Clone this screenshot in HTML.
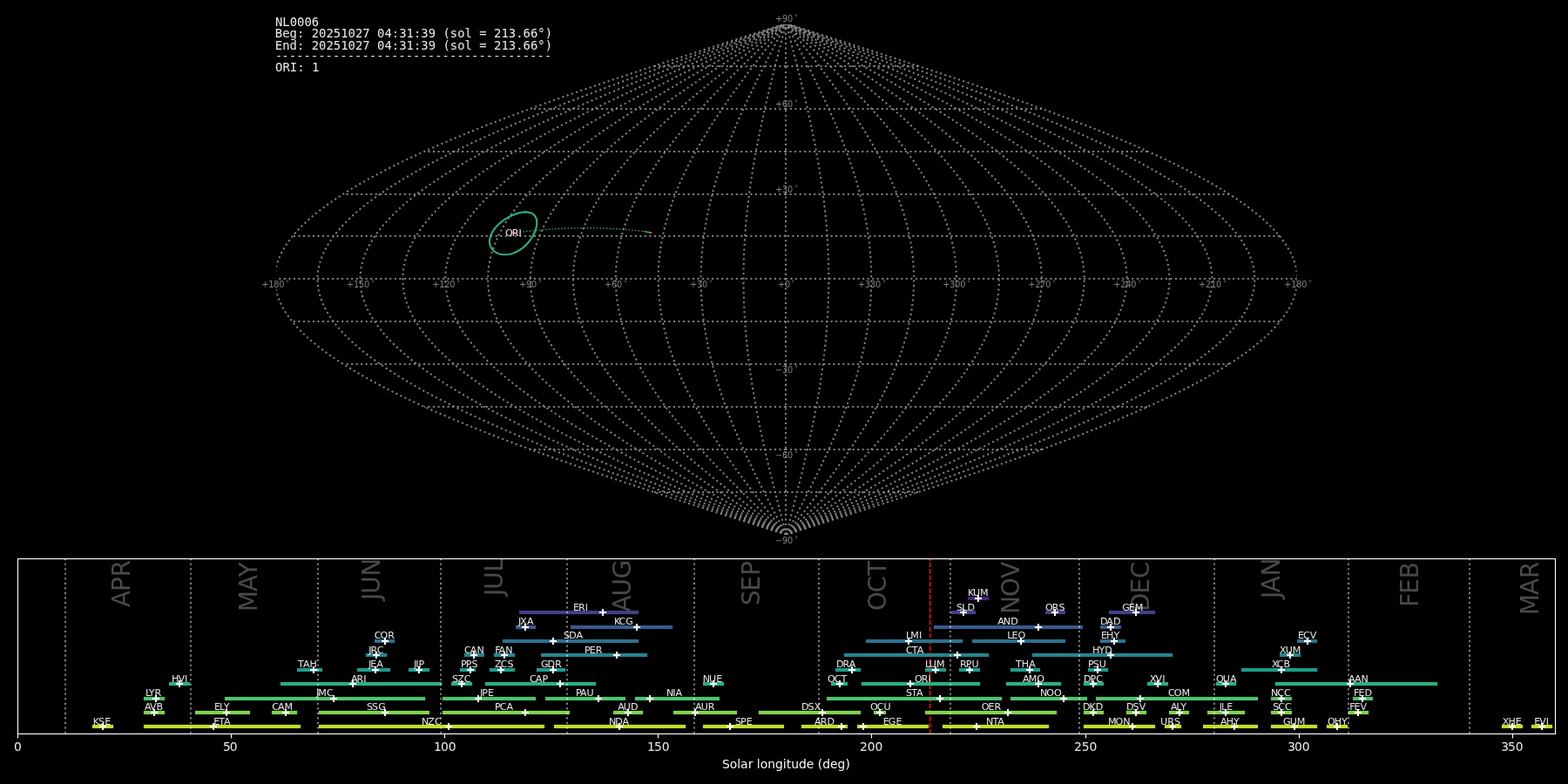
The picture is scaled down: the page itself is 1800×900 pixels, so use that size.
<!DOCTYPE html>
<html lang="en"><head><meta charset="utf-8"><title>NL0006 shower association</title>
<style>html,body{margin:0;padding:0;background:#000;overflow:hidden}svg{display:block;will-change:transform}text{white-space:pre}.s{font-family:'DejaVu Sans','Liberation Sans',sans-serif}.m{font-family:'DejaVu Sans Mono','Liberation Mono',monospace}</style></head><body>
<svg xmlns="http://www.w3.org/2000/svg" width="1800" height="900" viewBox="0 0 1800 900">
<rect width="1800" height="900" fill="#000"/>
<clipPath id="c0"><rect x="317.18" y="28" width="1171.47" height="585.73"/></clipPath>
<clipPath id="c1"><rect x="19.843" y="640.83" width="1765.152" height="200.89"/></clipPath>
<path d="M902 614L902 610L902 607L902 604L902 601L902 597L902 594L902 591L902 588L902 584L902 581L902 578L902 575L902 571L902 568L902 565L902 562L902 558L902 555L902 552L902 549L902 545L902 542L902 539L902 536L902 532L902 529L902 526L902 522L902 519L902 516L902 513L902 509L902 506L902 503L902 500L902 496L902 493L902 490L902 487L902 483L902 480L902 477L902 474L902 470L902 467L902 464L902 461L902 457L902 454L902 451L902 447L902 444L902 441L902 438L902 434L902 431L902 428L902 425L902 421L902 418L902 415L902 412L902 408L902 405L902 402L902 399L902 395L902 392L902 389L902 386L902 382L902 379L902 376L902 373L902 369L902 366L902 363L902 359L902 356L902 353L902 350L902 346L902 343L902 340L902 337L902 333L902 330L902 327L902 324L902 320L902 317L902 314L902 311L902 307L902 304L902 301L902 298L902 294L902 291L902 288L902 284L902 281L902 278L902 275L902 271L902 268L902 265L902 262L902 258L902 255L902 252L902 249L902 245L902 242L902 239L902 236L902 232L902 229L902 226L902 223L902 219L902 216L902 213L902 210L902 206L902 203L902 200L902 196L902 193L902 190L902 187L902 183L902 180L902 177L902 174L902 170L902 167L902 164L902 161L902 157L902 154L902 151L902 148L902 144L902 141L902 138L902 135L902 131L902 128L902 125L902 121L902 118L902 115L902 112L902 108L902 105L902 102L902 99L902 95L902 92L902 89L902 86L902 82L902 79L902 76L902 73L902 69L902 66L902 63L902 60L902 56L902 53L902 50L902 47L902 43L902 40L902 37L902 33L902 30L902 27" fill="none" stroke="#808080" stroke-width="2.083" stroke-dasharray="2.083 3.437" stroke-linejoin="round" clip-path="url(#c0)"/>
<path d="M902.42 613.75L901.57 610.49L900.71 607.23L899.86 603.97L899.01 600.71L898.16 597.45L897.31 594.19L896.46 590.93L895.61 587.67L894.77 584.41L893.93 581.15L893.09 577.89L892.25 574.63L891.42 571.37L890.59 568.11L889.76 564.85L888.94 561.59L888.12 558.33L887.31 555.07L886.5 551.81L885.7 548.55L884.9 545.29L884.1 542.03L883.31 538.77L882.53 535.51L881.75 532.25L880.98 528.99L880.22 525.73L879.46 522.47L878.71 519.21L877.97 515.95L877.23 512.69L876.51 509.43L875.79 506.17L875.08 502.91L874.37 499.65L873.68 496.39L872.99 493.13L872.31 489.87L871.65 486.61L870.99 483.35L870.34 480.09L869.7 476.83L869.07 473.57L868.45 470.31L867.84 467.05L867.24 463.79L866.66 460.53L866.08 457.27L865.51 454.01L864.96 450.75L864.42 447.49L863.89 444.23L863.37 440.97L862.86 437.71L862.36 434.45L861.88 431.19L861.41 427.93L860.95 424.67L860.5 421.41L860.07 418.15L859.65 414.89L859.24 411.63L858.85 408.37L858.47 405.11L858.1 401.85L857.75 398.59L857.41 395.33L857.08 392.07L856.77 388.81L856.47 385.55L856.18 382.29L855.91 379.03L855.66 375.77L855.41 372.51L855.19 369.25L854.97 365.99L854.77 362.73L854.59 359.47L854.42 356.21L854.26 352.95L854.12 349.69L854 346.43L853.88 343.17L853.79 339.91L853.71 336.65L853.64 333.39L853.59 330.13L853.55 326.87L853.53 323.61L853.52 320.35L853.53 317.09L853.55 313.83L853.59 310.57L853.64 307.31L853.71 304.05L853.79 300.79L853.88 297.53L854 294.27L854.12 291.01L854.26 287.75L854.42 284.49L854.59 281.23L854.77 277.97L854.97 274.71L855.19 271.45L855.41 268.19L855.66 264.93L855.91 261.67L856.18 258.41L856.47 255.15L856.77 251.89L857.08 248.63L857.41 245.37L857.75 242.11L858.1 238.85L858.47 235.59L858.85 232.33L859.24 229.07L859.65 225.81L860.07 222.55L860.5 219.29L860.95 216.03L861.41 212.77L861.88 209.51L862.36 206.25L862.86 202.99L863.37 199.73L863.89 196.47L864.42 193.21L864.96 189.95L865.51 186.69L866.08 183.43L866.66 180.17L867.24 176.91L867.84 173.65L868.45 170.39L869.07 167.13L869.7 163.87L870.34 160.61L870.99 157.35L871.65 154.09L872.31 150.83L872.99 147.57L873.68 144.31L874.37 141.05L875.08 137.79L875.79 134.53L876.51 131.27L877.23 128.01L877.97 124.75L878.71 121.49L879.46 118.23L880.22 114.97L880.98 111.71L881.75 108.45L882.53 105.19L883.31 101.93L884.1 98.67L884.9 95.41L885.7 92.15L886.5 88.89L887.31 85.63L888.12 82.37L888.94 79.11L889.76 75.85L890.59 72.59L891.42 69.33L892.25 66.07L893.09 62.81L893.93 59.55L894.77 56.29L895.61 53.03L896.46 49.77L897.31 46.51L898.16 43.25L899.01 39.99L899.86 36.73L900.71 33.47L901.57 30.21L902.42 26.95" fill="none" stroke="#808080" stroke-width="2.083" stroke-dasharray="2.083 3.437" stroke-linejoin="round" clip-path="url(#c0)"/>
<path d="M902.42 613.75L900.71 610.49L899.01 607.23L897.3 603.97L895.6 600.71L893.9 597.45L892.2 594.19L890.5 590.93L888.81 587.67L887.12 584.41L885.44 581.15L883.76 577.89L882.09 574.63L880.42 571.37L878.76 568.11L877.11 564.85L875.46 561.59L873.83 558.33L872.2 555.07L870.58 551.81L868.97 548.55L867.37 545.29L865.78 542.03L864.21 538.77L862.64 535.51L861.09 532.25L859.55 528.99L858.02 525.73L856.51 522.47L855.01 519.21L853.52 515.95L852.05 512.69L850.59 509.43L849.15 506.17L847.73 502.91L846.32 499.65L844.93 496.39L843.56 493.13L842.21 489.87L840.87 486.61L839.56 483.35L838.26 480.09L836.98 476.83L835.72 473.57L834.48 470.31L833.26 467.05L832.07 463.79L830.89 460.53L829.74 457.27L828.61 454.01L827.5 450.75L826.42 447.49L825.35 444.23L824.31 440.97L823.3 437.71L822.31 434.45L821.34 431.19L820.4 427.93L819.48 424.67L818.59 421.41L817.72 418.15L816.88 414.89L816.07 411.63L815.28 408.37L814.52 405.11L813.78 401.85L813.08 398.59L812.39 395.33L811.74 392.07L811.12 388.81L810.52 385.55L809.95 382.29L809.41 379.03L808.89 375.77L808.41 372.51L807.95 369.25L807.53 365.99L807.13 362.73L806.76 359.47L806.42 356.21L806.11 352.95L805.82 349.69L805.57 346.43L805.35 343.17L805.16 339.91L804.99 336.65L804.86 333.39L804.75 330.13L804.68 326.87L804.63 323.61L804.62 320.35L804.63 317.09L804.68 313.83L804.75 310.57L804.86 307.31L804.99 304.05L805.16 300.79L805.35 297.53L805.57 294.27L805.82 291.01L806.11 287.75L806.42 284.49L806.76 281.23L807.13 277.97L807.53 274.71L807.95 271.45L808.41 268.19L808.89 264.93L809.41 261.67L809.95 258.41L810.52 255.15L811.12 251.89L811.74 248.63L812.39 245.37L813.08 242.11L813.78 238.85L814.52 235.59L815.28 232.33L816.07 229.07L816.88 225.81L817.72 222.55L818.59 219.29L819.48 216.03L820.4 212.77L821.34 209.51L822.31 206.25L823.3 202.99L824.31 199.73L825.35 196.47L826.42 193.21L827.5 189.95L828.61 186.69L829.74 183.43L830.89 180.17L832.07 176.91L833.26 173.65L834.48 170.39L835.72 167.13L836.98 163.87L838.26 160.61L839.56 157.35L840.87 154.09L842.21 150.83L843.56 147.57L844.93 144.31L846.32 141.05L847.73 137.79L849.15 134.53L850.59 131.27L852.05 128.01L853.52 124.75L855.01 121.49L856.51 118.23L858.02 114.97L859.55 111.71L861.09 108.45L862.64 105.19L864.21 101.93L865.78 98.67L867.37 95.41L868.97 92.15L870.58 88.89L872.2 85.63L873.83 82.37L875.46 79.11L877.11 75.85L878.76 72.59L880.42 69.33L882.09 66.07L883.76 62.81L885.44 59.55L887.12 56.29L888.81 53.03L890.5 49.77L892.2 46.51L893.9 43.25L895.6 39.99L897.3 36.73L899.01 33.47L900.71 30.21L902.42 26.95" fill="none" stroke="#808080" stroke-width="2.083" stroke-dasharray="2.083 3.437" stroke-linejoin="round" clip-path="url(#c0)"/>
<path d="M902.42 613.75L899.86 610.49L897.3 607.23L894.74 603.97L892.19 600.71L889.63 597.45L887.09 594.19L884.54 590.93L882 587.67L879.47 584.41L876.95 581.15L874.43 577.89L871.92 574.63L869.42 571.37L866.93 568.11L864.45 564.85L861.98 561.59L859.53 558.33L857.09 555.07L854.66 551.81L852.25 548.55L849.85 545.29L847.47 542.03L845.1 538.77L842.75 535.51L840.42 532.25L838.11 528.99L835.82 525.73L833.55 522.47L831.3 519.21L829.07 515.95L826.86 512.69L824.68 509.43L822.52 506.17L820.39 502.91L818.28 499.65L816.19 496.39L814.13 493.13L812.1 489.87L810.1 486.61L808.12 483.35L806.18 480.09L804.26 476.83L802.37 473.57L800.51 470.31L798.69 467.05L796.89 463.79L795.13 460.53L793.4 457.27L791.7 454.01L790.04 450.75L788.41 447.49L786.82 444.23L785.26 440.97L783.74 437.71L782.25 434.45L780.8 431.19L779.39 427.93L778.01 424.67L776.67 421.41L775.37 418.15L774.11 414.89L772.89 411.63L771.71 408.37L770.57 405.11L769.46 401.85L768.4 398.59L767.38 395.33L766.4 392.07L765.46 388.81L764.57 385.55L763.71 382.29L762.9 379.03L762.13 375.77L761.4 372.51L760.72 369.25L760.08 365.99L759.48 362.73L758.93 359.47L758.42 356.21L757.95 352.95L757.53 349.69L757.15 346.43L756.81 343.17L756.52 339.91L756.28 336.65L756.08 333.39L755.92 330.13L755.81 326.87L755.74 323.61L755.72 320.35L755.74 317.09L755.81 313.83L755.92 310.57L756.08 307.31L756.28 304.05L756.52 300.79L756.81 297.53L757.15 294.27L757.53 291.01L757.95 287.75L758.42 284.49L758.93 281.23L759.48 277.97L760.08 274.71L760.72 271.45L761.4 268.19L762.13 264.93L762.9 261.67L763.71 258.41L764.57 255.15L765.46 251.89L766.4 248.63L767.38 245.37L768.4 242.11L769.46 238.85L770.57 235.59L771.71 232.33L772.89 229.07L774.11 225.81L775.37 222.55L776.67 219.29L778.01 216.03L779.39 212.77L780.8 209.51L782.25 206.25L783.74 202.99L785.26 199.73L786.82 196.47L788.41 193.21L790.04 189.95L791.7 186.69L793.4 183.43L795.13 180.17L796.89 176.91L798.69 173.65L800.51 170.39L802.37 167.13L804.26 163.87L806.18 160.61L808.12 157.35L810.1 154.09L812.1 150.83L814.13 147.57L816.19 144.31L818.28 141.05L820.39 137.79L822.52 134.53L824.68 131.27L826.86 128.01L829.07 124.75L831.3 121.49L833.55 118.23L835.82 114.97L838.11 111.71L840.42 108.45L842.75 105.19L845.1 101.93L847.47 98.67L849.85 95.41L852.25 92.15L854.66 88.89L857.09 85.63L859.53 82.37L861.98 79.11L864.45 75.85L866.93 72.59L869.42 69.33L871.92 66.07L874.43 62.81L876.95 59.55L879.47 56.29L882 53.03L884.54 49.77L887.09 46.51L889.63 43.25L892.19 39.99L894.74 36.73L897.3 33.47L899.86 30.21L902.42 26.95" fill="none" stroke="#808080" stroke-width="2.083" stroke-dasharray="2.083 3.437" stroke-linejoin="round" clip-path="url(#c0)"/>
<path d="M902.42 613.75L899.01 610.49L895.59 607.23L892.18 603.97L888.78 600.71L885.37 597.45L881.97 594.19L878.58 590.93L875.2 587.67L871.82 584.41L868.45 581.15L865.1 577.89L861.75 574.63L858.42 571.37L855.1 568.11L851.79 564.85L848.51 561.59L845.23 558.33L841.98 555.07L838.74 551.81L835.52 548.55L832.32 545.29L829.15 542.03L825.99 538.77L822.86 535.51L819.76 532.25L816.67 528.99L813.62 525.73L810.59 522.47L807.59 519.21L804.62 515.95L801.68 512.69L798.77 509.43L795.89 506.17L793.04 502.91L790.23 499.65L787.45 496.39L784.7 493.13L782 489.87L779.32 486.61L776.69 483.35L774.09 480.09L771.54 476.83L769.02 473.57L766.54 470.31L764.11 467.05L761.72 463.79L759.37 460.53L757.06 457.27L754.8 454.01L752.58 450.75L750.41 447.49L748.29 444.23L746.21 440.97L744.18 437.71L742.19 434.45L740.26 431.19L738.38 427.93L736.54 424.67L734.76 421.41L733.03 418.15L731.34 414.89L729.72 411.63L728.14 408.37L726.62 405.11L725.15 401.85L723.73 398.59L722.37 395.33L721.06 392.07L719.81 388.81L718.62 385.55L717.48 382.29L716.39 379.03L715.37 375.77L714.4 372.51L713.48 369.25L712.63 365.99L711.83 362.73L711.09 359.47L710.41 356.21L709.79 352.95L709.23 349.69L708.72 346.43L708.28 343.17L707.89 339.91L707.56 336.65L707.3 333.39L707.09 330.13L706.94 326.87L706.85 323.61L706.82 320.35L706.85 317.09L706.94 313.83L707.09 310.57L707.3 307.31L707.56 304.05L707.89 300.79L708.28 297.53L708.72 294.27L709.23 291.01L709.79 287.75L710.41 284.49L711.09 281.23L711.83 277.97L712.63 274.71L713.48 271.45L714.4 268.19L715.37 264.93L716.39 261.67L717.48 258.41L718.62 255.15L719.81 251.89L721.06 248.63L722.37 245.37L723.73 242.11L725.15 238.85L726.62 235.59L728.14 232.33L729.72 229.07L731.34 225.81L733.03 222.55L734.76 219.29L736.54 216.03L738.38 212.77L740.26 209.51L742.19 206.25L744.18 202.99L746.21 199.73L748.29 196.47L750.41 193.21L752.58 189.95L754.8 186.69L757.06 183.43L759.37 180.17L761.72 176.91L764.11 173.65L766.54 170.39L769.02 167.13L771.54 163.87L774.09 160.61L776.69 157.35L779.32 154.09L782 150.83L784.7 147.57L787.45 144.31L790.23 141.05L793.04 137.79L795.89 134.53L798.77 131.27L801.68 128.01L804.62 124.75L807.59 121.49L810.59 118.23L813.62 114.97L816.67 111.71L819.76 108.45L822.86 105.19L825.99 101.93L829.15 98.67L832.32 95.41L835.52 92.15L838.74 88.89L841.98 85.63L845.23 82.37L848.51 79.11L851.79 75.85L855.1 72.59L858.42 69.33L861.75 66.07L865.1 62.81L868.45 59.55L871.82 56.29L875.2 53.03L878.58 49.77L881.97 46.51L885.37 43.25L888.78 39.99L892.18 36.73L895.59 33.47L899.01 30.21L902.42 26.95" fill="none" stroke="#808080" stroke-width="2.083" stroke-dasharray="2.083 3.437" stroke-linejoin="round" clip-path="url(#c0)"/>
<path d="M902.42 613.75L898.15 610.49L893.89 607.23L889.62 603.97L885.36 600.71L881.11 597.45L876.86 594.19L872.62 590.93L868.39 587.67L864.17 584.41L859.96 581.15L855.77 577.89L851.59 574.63L847.42 571.37L843.27 568.11L839.14 564.85L835.03 561.59L830.94 558.33L826.87 555.07L822.82 551.81L818.8 548.55L814.8 545.29L810.83 542.03L806.89 538.77L802.97 535.51L799.09 532.25L795.24 528.99L791.42 525.73L787.63 522.47L783.88 519.21L780.17 515.95L776.49 512.69L772.85 509.43L769.26 506.17L765.7 502.91L762.18 499.65L758.71 496.39L755.28 493.13L751.89 489.87L748.55 486.61L745.26 483.35L742.01 480.09L738.82 476.83L735.67 473.57L732.58 470.31L729.53 467.05L726.54 463.79L723.6 460.53L720.72 457.27L717.89 454.01L715.12 450.75L712.41 447.49L709.75 444.23L707.15 440.97L704.62 437.71L702.14 434.45L699.72 431.19L697.37 427.93L695.07 424.67L692.84 421.41L690.68 418.15L688.58 414.89L686.54 411.63L684.57 408.37L682.66 405.11L680.83 401.85L679.06 398.59L677.36 395.33L675.72 392.07L674.16 388.81L672.67 385.55L671.24 382.29L669.89 379.03L668.6 375.77L667.39 372.51L666.25 369.25L665.18 365.99L664.19 362.73L663.26 359.47L662.41 356.21L661.63 352.95L660.93 349.69L660.3 346.43L659.74 343.17L659.26 339.91L658.85 336.65L658.52 333.39L658.26 330.13L658.07 326.87L657.96 323.61L657.92 320.35L657.96 317.09L658.07 313.83L658.26 310.57L658.52 307.31L658.85 304.05L659.26 300.79L659.74 297.53L660.3 294.27L660.93 291.01L661.63 287.75L662.41 284.49L663.26 281.23L664.19 277.97L665.18 274.71L666.25 271.45L667.39 268.19L668.6 264.93L669.89 261.67L671.24 258.41L672.67 255.15L674.16 251.89L675.72 248.63L677.36 245.37L679.06 242.11L680.83 238.85L682.66 235.59L684.57 232.33L686.54 229.07L688.58 225.81L690.68 222.55L692.84 219.29L695.07 216.03L697.37 212.77L699.72 209.51L702.14 206.25L704.62 202.99L707.15 199.73L709.75 196.47L712.41 193.21L715.12 189.95L717.89 186.69L720.72 183.43L723.6 180.17L726.54 176.91L729.53 173.65L732.58 170.39L735.67 167.13L738.82 163.87L742.01 160.61L745.26 157.35L748.55 154.09L751.89 150.83L755.28 147.57L758.71 144.31L762.18 141.05L765.7 137.79L769.26 134.53L772.85 131.27L776.49 128.01L780.17 124.75L783.88 121.49L787.63 118.23L791.42 114.97L795.24 111.71L799.09 108.45L802.97 105.19L806.89 101.93L810.83 98.67L814.8 95.41L818.8 92.15L822.82 88.89L826.87 85.63L830.94 82.37L835.03 79.11L839.14 75.85L843.27 72.59L847.42 69.33L851.59 66.07L855.77 62.81L859.96 59.55L864.17 56.29L868.39 53.03L872.62 49.77L876.86 46.51L881.11 43.25L885.36 39.99L889.62 36.73L893.89 33.47L898.15 30.21L902.42 26.95" fill="none" stroke="#808080" stroke-width="2.083" stroke-dasharray="2.083 3.437" stroke-linejoin="round" clip-path="url(#c0)"/>
<path d="M902.42 613.75L897.3 610.49L892.18 607.23L887.06 603.97L881.95 600.71L876.85 597.45L871.75 594.19L866.66 590.93L861.59 587.67L856.52 584.41L851.47 581.15L846.44 577.89L841.42 574.63L836.42 571.37L831.44 568.11L826.48 564.85L821.55 561.59L816.64 558.33L811.75 555.07L806.9 551.81L802.07 548.55L797.27 545.29L792.51 542.03L787.78 538.77L783.08 535.51L778.42 532.25L773.8 528.99L769.22 525.73L764.68 522.47L760.18 519.21L755.72 515.95L751.31 512.69L746.94 509.43L742.62 506.17L738.35 502.91L734.13 499.65L729.96 496.39L725.85 493.13L721.78 489.87L717.78 486.61L713.83 483.35L709.93 480.09L706.1 476.83L702.32 473.57L698.61 470.31L694.95 467.05L691.37 463.79L687.84 460.53L684.38 457.27L680.99 454.01L677.66 450.75L674.41 447.49L671.22 444.23L668.1 440.97L665.05 437.71L662.08 434.45L659.18 431.19L656.35 427.93L653.6 424.67L650.93 421.41L648.33 418.15L645.81 414.89L643.36 411.63L641 408.37L638.71 405.11L636.51 401.85L634.39 398.59L632.34 395.33L630.38 392.07L628.51 388.81L626.71 385.55L625 382.29L623.38 379.03L621.84 375.77L620.39 372.51L619.02 369.25L617.74 365.99L616.54 362.73L615.43 359.47L614.41 356.21L613.48 352.95L612.63 349.69L611.88 346.43L611.21 343.17L610.63 339.91L610.14 336.65L609.73 333.39L609.42 330.13L609.2 326.87L609.06 323.61L609.02 320.35L609.06 317.09L609.2 313.83L609.42 310.57L609.73 307.31L610.14 304.05L610.63 300.79L611.21 297.53L611.88 294.27L612.63 291.01L613.48 287.75L614.41 284.49L615.43 281.23L616.54 277.97L617.74 274.71L619.02 271.45L620.39 268.19L621.84 264.93L623.38 261.67L625 258.41L626.71 255.15L628.51 251.89L630.38 248.63L632.34 245.37L634.39 242.11L636.51 238.85L638.71 235.59L641 232.33L643.36 229.07L645.81 225.81L648.33 222.55L650.93 219.29L653.6 216.03L656.35 212.77L659.18 209.51L662.08 206.25L665.05 202.99L668.1 199.73L671.22 196.47L674.41 193.21L677.66 189.95L680.99 186.69L684.38 183.43L687.84 180.17L691.37 176.91L694.95 173.65L698.61 170.39L702.32 167.13L706.1 163.87L709.93 160.61L713.83 157.35L717.78 154.09L721.78 150.83L725.85 147.57L729.96 144.31L734.13 141.05L738.35 137.79L742.62 134.53L746.94 131.27L751.31 128.01L755.72 124.75L760.18 121.49L764.68 118.23L769.22 114.97L773.8 111.71L778.42 108.45L783.08 105.19L787.78 101.93L792.51 98.67L797.27 95.41L802.07 92.15L806.9 88.89L811.75 85.63L816.64 82.37L821.55 79.11L826.48 75.85L831.44 72.59L836.42 69.33L841.42 66.07L846.44 62.81L851.47 59.55L856.52 56.29L861.59 53.03L866.66 49.77L871.75 46.51L876.85 43.25L881.95 39.99L887.06 36.73L892.18 33.47L897.3 30.21L902.42 26.95" fill="none" stroke="#808080" stroke-width="2.083" stroke-dasharray="2.083 3.437" stroke-linejoin="round" clip-path="url(#c0)"/>
<path d="M902.42 613.75L896.45 610.49L890.47 607.23L884.51 603.97L878.54 600.71L872.59 597.45L866.64 594.19L860.7 590.93L854.78 587.67L848.87 584.41L842.98 581.15L837.11 577.89L831.25 574.63L825.42 571.37L819.61 568.11L813.83 564.85L808.07 561.59L802.34 558.33L796.64 555.07L790.98 551.81L785.35 548.55L779.75 545.29L774.19 542.03L768.67 538.77L763.19 535.51L757.76 532.25L752.37 528.99L747.02 525.73L741.72 522.47L736.47 519.21L731.27 515.95L726.12 512.69L721.03 509.43L715.99 506.17L711.01 502.91L706.08 499.65L701.22 496.39L696.42 493.13L691.68 489.87L687 486.61L682.39 483.35L677.85 480.09L673.38 476.83L668.97 473.57L664.64 470.31L660.38 467.05L656.19 463.79L652.08 460.53L648.04 457.27L644.08 454.01L640.2 450.75L636.4 447.49L632.68 444.23L629.05 440.97L625.49 437.71L622.02 434.45L618.64 431.19L615.34 427.93L612.13 424.67L609.01 421.41L605.98 418.15L603.04 414.89L600.19 411.63L597.43 408.37L594.76 405.11L592.19 401.85L589.71 398.59L587.33 395.33L585.04 392.07L582.86 388.81L580.76 385.55L578.77 382.29L576.87 379.03L575.08 375.77L573.38 372.51L571.78 369.25L570.29 365.99L568.89 362.73L567.6 359.47L566.41 356.21L565.32 352.95L564.33 349.69L563.45 346.43L562.67 343.17L562 339.91L561.42 336.65L560.95 333.39L560.59 330.13L560.33 326.87L560.17 323.61L560.12 320.35L560.17 317.09L560.33 313.83L560.59 310.57L560.95 307.31L561.42 304.05L562 300.79L562.67 297.53L563.45 294.27L564.33 291.01L565.32 287.75L566.41 284.49L567.6 281.23L568.89 277.97L570.29 274.71L571.78 271.45L573.38 268.19L575.08 264.93L576.87 261.67L578.77 258.41L580.76 255.15L582.86 251.89L585.04 248.63L587.33 245.37L589.71 242.11L592.19 238.85L594.76 235.59L597.43 232.33L600.19 229.07L603.04 225.81L605.98 222.55L609.01 219.29L612.13 216.03L615.34 212.77L618.64 209.51L622.02 206.25L625.49 202.99L629.05 199.73L632.68 196.47L636.4 193.21L640.2 189.95L644.08 186.69L648.04 183.43L652.08 180.17L656.19 176.91L660.38 173.65L664.64 170.39L668.97 167.13L673.38 163.87L677.85 160.61L682.39 157.35L687 154.09L691.68 150.83L696.42 147.57L701.22 144.31L706.08 141.05L711.01 137.79L715.99 134.53L721.03 131.27L726.12 128.01L731.27 124.75L736.47 121.49L741.72 118.23L747.02 114.97L752.37 111.71L757.76 108.45L763.19 105.19L768.67 101.93L774.19 98.67L779.75 95.41L785.35 92.15L790.98 88.89L796.64 85.63L802.34 82.37L808.07 79.11L813.83 75.85L819.61 72.59L825.42 69.33L831.25 66.07L837.11 62.81L842.98 59.55L848.87 56.29L854.78 53.03L860.7 49.77L866.64 46.51L872.59 43.25L878.54 39.99L884.51 36.73L890.47 33.47L896.45 30.21L902.42 26.95" fill="none" stroke="#808080" stroke-width="2.083" stroke-dasharray="2.083 3.437" stroke-linejoin="round" clip-path="url(#c0)"/>
<path d="M902.42 613.75L895.59 610.49L888.77 607.23L881.95 603.97L875.13 600.71L868.32 597.45L861.53 594.19L854.74 590.93L847.98 587.67L841.22 584.41L834.49 581.15L827.78 577.89L821.08 574.63L814.42 571.37L807.78 568.11L801.17 564.85L794.59 561.59L788.04 558.33L781.53 555.07L775.06 551.81L768.62 548.55L762.23 545.29L755.87 542.03L749.57 538.77L743.3 535.51L737.09 532.25L730.93 528.99L724.82 525.73L718.76 522.47L712.76 519.21L706.82 515.95L700.94 512.69L695.12 509.43L689.36 506.17L683.66 502.91L678.04 499.65L672.48 496.39L666.99 493.13L661.57 489.87L656.23 486.61L650.96 483.35L645.77 480.09L640.66 476.83L635.62 473.57L630.67 470.31L625.8 467.05L621.01 463.79L616.31 460.53L611.7 457.27L607.18 454.01L602.74 450.75L598.4 447.49L594.15 444.23L589.99 440.97L585.93 437.71L581.97 434.45L578.1 431.19L574.33 427.93L570.66 424.67L567.1 421.41L563.63 418.15L560.27 414.89L557.01 411.63L553.86 408.37L550.81 405.11L547.87 401.85L545.04 398.59L542.32 395.33L539.71 392.07L537.2 388.81L534.81 385.55L532.53 382.29L530.37 379.03L528.31 375.77L526.37 372.51L524.55 369.25L522.84 365.99L521.25 362.73L519.77 359.47L518.41 356.21L517.16 352.95L516.04 349.69L515.03 346.43L514.14 343.17L513.36 339.91L512.71 336.65L512.17 333.39L511.76 330.13L511.46 326.87L511.28 323.61L511.22 320.35L511.28 317.09L511.46 313.83L511.76 310.57L512.17 307.31L512.71 304.05L513.36 300.79L514.14 297.53L515.03 294.27L516.04 291.01L517.16 287.75L518.41 284.49L519.77 281.23L521.25 277.97L522.84 274.71L524.55 271.45L526.37 268.19L528.31 264.93L530.37 261.67L532.53 258.41L534.81 255.15L537.2 251.89L539.71 248.63L542.32 245.37L545.04 242.11L547.87 238.85L550.81 235.59L553.86 232.33L557.01 229.07L560.27 225.81L563.63 222.55L567.1 219.29L570.66 216.03L574.33 212.77L578.1 209.51L581.97 206.25L585.93 202.99L589.99 199.73L594.15 196.47L598.4 193.21L602.74 189.95L607.18 186.69L611.7 183.43L616.31 180.17L621.01 176.91L625.8 173.65L630.67 170.39L635.62 167.13L640.66 163.87L645.77 160.61L650.96 157.35L656.23 154.09L661.57 150.83L666.99 147.57L672.48 144.31L678.04 141.05L683.66 137.79L689.36 134.53L695.12 131.27L700.94 128.01L706.82 124.75L712.76 121.49L718.76 118.23L724.82 114.97L730.93 111.71L737.09 108.45L743.3 105.19L749.57 101.93L755.87 98.67L762.23 95.41L768.62 92.15L775.06 88.89L781.53 85.63L788.04 82.37L794.59 79.11L801.17 75.85L807.78 72.59L814.42 69.33L821.08 66.07L827.78 62.81L834.49 59.55L841.22 56.29L847.98 53.03L854.74 49.77L861.53 46.51L868.32 43.25L875.13 39.99L881.95 36.73L888.77 33.47L895.59 30.21L902.42 26.95" fill="none" stroke="#808080" stroke-width="2.083" stroke-dasharray="2.083 3.437" stroke-linejoin="round" clip-path="url(#c0)"/>
<path d="M902.42 613.75L894.74 610.49L887.06 607.23L879.39 603.97L871.72 600.71L864.06 597.45L856.42 594.19L848.79 590.93L841.17 587.67L833.57 584.41L826 581.15L818.44 577.89L810.92 574.63L803.42 571.37L795.95 568.11L788.51 564.85L781.11 561.59L773.75 558.33L766.42 555.07L759.14 551.81L751.9 548.55L744.7 545.29L737.56 542.03L730.46 538.77L723.42 535.51L716.43 532.25L709.49 528.99L702.62 525.73L695.81 522.47L689.06 519.21L682.37 515.95L675.75 512.69L669.2 509.43L662.72 506.17L656.32 502.91L649.99 499.65L643.74 496.39L637.56 493.13L631.47 489.87L625.46 486.61L619.53 483.35L613.69 480.09L607.94 476.83L602.27 473.57L596.7 470.31L591.22 467.05L585.84 463.79L580.55 460.53L575.36 457.27L570.27 454.01L565.28 450.75L560.4 447.49L555.62 444.23L550.94 440.97L546.37 437.71L541.91 434.45L537.56 431.19L533.32 427.93L529.19 424.67L525.18 421.41L521.28 418.15L517.5 414.89L513.83 411.63L510.29 408.37L506.86 405.11L503.55 401.85L500.37 398.59L497.31 395.33L494.37 392.07L491.55 388.81L488.86 385.55L486.3 382.29L483.86 379.03L481.55 375.77L479.37 372.51L477.32 369.25L475.39 365.99L473.6 362.73L471.94 359.47L470.41 356.21L469.01 352.95L467.74 349.69L466.6 346.43L465.6 343.17L464.73 339.91L463.99 336.65L463.39 333.39L462.92 330.13L462.59 326.87L462.39 323.61L462.32 320.35L462.39 317.09L462.59 313.83L462.92 310.57L463.39 307.31L463.99 304.05L464.73 300.79L465.6 297.53L466.6 294.27L467.74 291.01L469.01 287.75L470.41 284.49L471.94 281.23L473.6 277.97L475.39 274.71L477.32 271.45L479.37 268.19L481.55 264.93L483.86 261.67L486.3 258.41L488.86 255.15L491.55 251.89L494.37 248.63L497.31 245.37L500.37 242.11L503.55 238.85L506.86 235.59L510.29 232.33L513.83 229.07L517.5 225.81L521.28 222.55L525.18 219.29L529.19 216.03L533.32 212.77L537.56 209.51L541.91 206.25L546.37 202.99L550.94 199.73L555.62 196.47L560.4 193.21L565.28 189.95L570.27 186.69L575.36 183.43L580.55 180.17L585.84 176.91L591.22 173.65L596.7 170.39L602.27 167.13L607.94 163.87L613.69 160.61L619.53 157.35L625.46 154.09L631.47 150.83L637.56 147.57L643.74 144.31L649.99 141.05L656.32 137.79L662.72 134.53L669.2 131.27L675.75 128.01L682.37 124.75L689.06 121.49L695.81 118.23L702.62 114.97L709.49 111.71L716.43 108.45L723.42 105.19L730.46 101.93L737.56 98.67L744.7 95.41L751.9 92.15L759.14 88.89L766.42 85.63L773.75 82.37L781.11 79.11L788.51 75.85L795.95 72.59L803.42 69.33L810.92 66.07L818.44 62.81L826 59.55L833.57 56.29L841.17 53.03L848.79 49.77L856.42 46.51L864.06 43.25L871.72 39.99L879.39 36.73L887.06 33.47L894.74 30.21L902.42 26.95" fill="none" stroke="#808080" stroke-width="2.083" stroke-dasharray="2.083 3.437" stroke-linejoin="round" clip-path="url(#c0)"/>
<path d="M902.42 613.75L893.89 610.49L885.35 607.23L876.83 603.97L868.31 600.71L859.8 597.45L851.31 594.19L842.83 590.93L834.36 587.67L825.92 584.41L817.51 581.15L809.11 577.89L800.75 574.63L792.42 571.37L784.12 568.11L775.86 564.85L767.63 561.59L759.45 558.33L751.31 555.07L743.22 551.81L735.17 548.55L727.18 545.29L719.24 542.03L711.35 538.77L703.53 535.51L695.76 532.25L688.06 528.99L680.42 525.73L672.85 522.47L665.35 519.21L657.92 515.95L650.57 512.69L643.29 509.43L636.09 506.17L628.97 502.91L621.94 499.65L614.99 496.39L608.13 493.13L601.36 489.87L594.68 486.61L588.1 483.35L581.61 480.09L575.22 476.83L568.92 473.57L562.73 470.31L556.64 467.05L550.66 463.79L544.79 460.53L539.02 457.27L533.37 454.01L527.82 450.75L522.4 447.49L517.08 444.23L511.89 440.97L506.81 437.71L501.85 434.45L497.02 431.19L492.31 427.93L487.72 424.67L483.27 421.41L478.93 418.15L474.73 414.89L470.66 411.63L466.72 408.37L462.91 405.11L459.24 401.85L455.7 398.59L452.29 395.33L449.03 392.07L445.9 388.81L442.91 385.55L440.06 382.29L437.35 379.03L434.79 375.77L432.36 372.51L430.08 369.25L427.95 365.99L425.95 362.73L424.11 359.47L422.4 356.21L420.85 352.95L419.44 349.69L418.18 346.43L417.06 343.17L416.1 339.91L415.28 336.65L414.61 333.39L414.09 330.13L413.72 326.87L413.49 323.61L413.42 320.35L413.49 317.09L413.72 313.83L414.09 310.57L414.61 307.31L415.28 304.05L416.1 300.79L417.06 297.53L418.18 294.27L419.44 291.01L420.85 287.75L422.4 284.49L424.11 281.23L425.95 277.97L427.95 274.71L430.08 271.45L432.36 268.19L434.79 264.93L437.35 261.67L440.06 258.41L442.91 255.15L445.9 251.89L449.03 248.63L452.29 245.37L455.7 242.11L459.24 238.85L462.91 235.59L466.72 232.33L470.66 229.07L474.73 225.81L478.93 222.55L483.27 219.29L487.72 216.03L492.31 212.77L497.02 209.51L501.85 206.25L506.81 202.99L511.89 199.73L517.08 196.47L522.4 193.21L527.82 189.95L533.37 186.69L539.02 183.43L544.79 180.17L550.66 176.91L556.64 173.65L562.73 170.39L568.92 167.13L575.22 163.87L581.61 160.61L588.1 157.35L594.68 154.09L601.36 150.83L608.13 147.57L614.99 144.31L621.94 141.05L628.97 137.79L636.09 134.53L643.29 131.27L650.57 128.01L657.92 124.75L665.35 121.49L672.85 118.23L680.42 114.97L688.06 111.71L695.76 108.45L703.53 105.19L711.35 101.93L719.24 98.67L727.18 95.41L735.17 92.15L743.22 88.89L751.31 85.63L759.45 82.37L767.63 79.11L775.86 75.85L784.12 72.59L792.42 69.33L800.75 66.07L809.11 62.81L817.51 59.55L825.92 56.29L834.36 53.03L842.83 49.77L851.31 46.51L859.8 43.25L868.31 39.99L876.83 36.73L885.35 33.47L893.89 30.21L902.42 26.95" fill="none" stroke="#808080" stroke-width="2.083" stroke-dasharray="2.083 3.437" stroke-linejoin="round" clip-path="url(#c0)"/>
<path d="M902.42 613.75L893.03 610.49L883.65 607.23L874.27 603.97L864.9 600.71L855.54 597.45L846.19 594.19L836.87 590.93L827.56 587.67L818.27 584.41L809.01 581.15L799.78 577.89L790.58 574.63L781.42 571.37L772.29 568.11L763.2 564.85L754.15 561.59L745.15 558.33L736.2 555.07L727.3 551.81L718.45 548.55L709.65 545.29L700.92 542.03L692.25 538.77L683.64 535.51L675.09 532.25L666.62 528.99L658.22 525.73L649.89 522.47L641.64 519.21L633.47 515.95L625.38 512.69L617.38 509.43L609.46 506.17L601.63 502.91L593.89 499.65L586.25 496.39L578.7 493.13L571.26 489.87L563.91 486.61L556.66 483.35L549.53 480.09L542.49 476.83L535.57 473.57L528.76 470.31L522.07 467.05L515.49 463.79L509.02 460.53L502.68 457.27L496.46 454.01L490.36 450.75L484.39 447.49L478.55 444.23L472.83 440.97L467.25 437.71L461.8 434.45L456.48 431.19L451.3 427.93L446.25 424.67L441.35 421.41L436.58 418.15L431.96 414.89L427.48 411.63L423.15 408.37L418.96 405.11L414.92 401.85L411.02 398.59L407.28 395.33L403.69 392.07L400.25 388.81L396.96 385.55L393.83 382.29L390.85 379.03L388.02 375.77L385.36 372.51L382.85 369.25L380.5 365.99L378.31 362.73L376.27 359.47L374.4 356.21L372.69 352.95L371.14 349.69L369.75 346.43L368.53 343.17L367.47 339.91L366.57 336.65L365.83 333.39L365.26 330.13L364.85 326.87L364.6 323.61L364.52 320.35L364.6 317.09L364.85 313.83L365.26 310.57L365.83 307.31L366.57 304.05L367.47 300.79L368.53 297.53L369.75 294.27L371.14 291.01L372.69 287.75L374.4 284.49L376.27 281.23L378.31 277.97L380.5 274.71L382.85 271.45L385.36 268.19L388.02 264.93L390.85 261.67L393.83 258.41L396.96 255.15L400.25 251.89L403.69 248.63L407.28 245.37L411.02 242.11L414.92 238.85L418.96 235.59L423.15 232.33L427.48 229.07L431.96 225.81L436.58 222.55L441.35 219.29L446.25 216.03L451.3 212.77L456.48 209.51L461.8 206.25L467.25 202.99L472.83 199.73L478.55 196.47L484.39 193.21L490.36 189.95L496.46 186.69L502.68 183.43L509.02 180.17L515.49 176.91L522.07 173.65L528.76 170.39L535.57 167.13L542.49 163.87L549.53 160.61L556.66 157.35L563.91 154.09L571.26 150.83L578.7 147.57L586.25 144.31L593.89 141.05L601.63 137.79L609.46 134.53L617.38 131.27L625.38 128.01L633.47 124.75L641.64 121.49L649.89 118.23L658.22 114.97L666.62 111.71L675.09 108.45L683.64 105.19L692.25 101.93L700.92 98.67L709.65 95.41L718.45 92.15L727.3 88.89L736.2 85.63L745.15 82.37L754.15 79.11L763.2 75.85L772.29 72.59L781.42 69.33L790.58 66.07L799.78 62.81L809.01 59.55L818.27 56.29L827.56 53.03L836.87 49.77L846.19 46.51L855.54 43.25L864.9 39.99L874.27 36.73L883.65 33.47L893.03 30.21L902.42 26.95" fill="none" stroke="#808080" stroke-width="2.083" stroke-dasharray="2.083 3.437" stroke-linejoin="round" clip-path="url(#c0)"/>
<path d="M902.42 613.75L892.18 610.49L881.94 607.23L871.71 603.97L861.49 600.71L851.28 597.45L841.08 594.19L830.91 590.93L820.75 587.67L810.62 584.41L800.52 581.15L790.45 577.89L780.42 574.63L770.42 571.37L760.46 568.11L750.54 564.85L740.68 561.59L730.86 558.33L721.09 555.07L711.38 551.81L701.72 548.55L692.13 545.29L682.6 542.03L673.14 538.77L663.75 535.51L654.43 532.25L645.18 528.99L636.02 525.73L626.93 522.47L617.93 519.21L609.02 515.95L600.2 512.69L591.46 509.43L582.83 506.17L574.29 502.91L565.85 499.65L557.51 496.39L549.27 493.13L541.15 489.87L533.13 486.61L525.23 483.35L517.44 480.09L509.77 476.83L502.22 473.57L494.79 470.31L487.49 467.05L480.31 463.79L473.26 460.53L466.34 457.27L459.56 454.01L452.91 450.75L446.39 447.49L440.02 444.23L433.78 440.97L427.69 437.71L421.74 434.45L415.94 431.19L410.29 427.93L404.79 424.67L399.43 421.41L394.24 418.15L389.19 414.89L384.31 411.63L379.58 408.37L375.01 405.11L370.6 401.85L366.35 398.59L362.27 395.33L358.35 392.07L354.6 388.81L351.01 385.55L347.59 382.29L344.34 379.03L341.26 375.77L338.35 372.51L335.61 369.25L333.05 365.99L330.66 362.73L328.44 359.47L326.4 356.21L324.53 352.95L322.84 349.69L321.33 346.43L319.99 343.17L318.83 339.91L317.85 336.65L317.05 333.39L316.42 330.13L315.98 326.87L315.71 323.61L315.62 320.35L315.71 317.09L315.98 313.83L316.42 310.57L317.05 307.31L317.85 304.05L318.83 300.79L319.99 297.53L321.33 294.27L322.84 291.01L324.53 287.75L326.4 284.49L328.44 281.23L330.66 277.97L333.05 274.71L335.61 271.45L338.35 268.19L341.26 264.93L344.34 261.67L347.59 258.41L351.01 255.15L354.6 251.89L358.35 248.63L362.27 245.37L366.35 242.11L370.6 238.85L375.01 235.59L379.58 232.33L384.31 229.07L389.19 225.81L394.24 222.55L399.43 219.29L404.79 216.03L410.29 212.77L415.94 209.51L421.74 206.25L427.69 202.99L433.78 199.73L440.02 196.47L446.39 193.21L452.91 189.95L459.56 186.69L466.34 183.43L473.26 180.17L480.31 176.91L487.49 173.65L494.79 170.39L502.22 167.13L509.77 163.87L517.44 160.61L525.23 157.35L533.13 154.09L541.15 150.83L549.27 147.57L557.51 144.31L565.85 141.05L574.29 137.79L582.83 134.53L591.46 131.27L600.2 128.01L609.02 124.75L617.93 121.49L626.93 118.23L636.02 114.97L645.18 111.71L654.43 108.45L663.75 105.19L673.14 101.93L682.6 98.67L692.13 95.41L701.72 92.15L711.38 88.89L721.09 85.63L730.86 82.37L740.68 79.11L750.54 75.85L760.46 72.59L770.42 69.33L780.42 66.07L790.45 62.81L800.52 59.55L810.62 56.29L820.75 53.03L830.91 49.77L841.08 46.51L851.28 43.25L861.49 39.99L871.71 36.73L881.94 33.47L892.18 30.21L902.42 26.95" fill="none" stroke="#808080" stroke-width="2.083" stroke-dasharray="2.083 3.437" stroke-linejoin="round" clip-path="url(#c0)"/>
<path d="M902.42 613.75L911.81 610.49L921.19 607.23L930.57 603.97L939.94 600.71L949.3 597.45L958.65 594.19L967.97 590.93L977.28 587.67L986.57 584.41L995.83 581.15L1005.06 577.89L1014.26 574.63L1023.42 571.37L1032.55 568.11L1041.64 564.85L1050.69 561.59L1059.69 558.33L1068.64 555.07L1077.54 551.81L1086.39 548.55L1095.19 545.29L1103.92 542.03L1112.59 538.77L1121.2 535.51L1129.75 532.25L1138.22 528.99L1146.62 525.73L1154.95 522.47L1163.2 519.21L1171.37 515.95L1179.46 512.69L1187.46 509.43L1195.38 506.17L1203.21 502.91L1210.95 499.65L1218.59 496.39L1226.14 493.13L1233.58 489.87L1240.93 486.61L1248.18 483.35L1255.31 480.09L1262.35 476.83L1269.27 473.57L1276.08 470.31L1282.77 467.05L1289.35 463.79L1295.82 460.53L1302.16 457.27L1308.38 454.01L1314.48 450.75L1320.45 447.49L1326.29 444.23L1332.01 440.97L1337.59 437.71L1343.04 434.45L1348.36 431.19L1353.54 427.93L1358.59 424.67L1363.49 421.41L1368.26 418.15L1372.88 414.89L1377.36 411.63L1381.69 408.37L1385.88 405.11L1389.92 401.85L1393.82 398.59L1397.56 395.33L1401.15 392.07L1404.59 388.81L1407.88 385.55L1411.01 382.29L1413.99 379.03L1416.82 375.77L1419.48 372.51L1421.99 369.25L1424.34 365.99L1426.53 362.73L1428.57 359.47L1430.44 356.21L1432.15 352.95L1433.7 349.69L1435.09 346.43L1436.31 343.17L1437.37 339.91L1438.27 336.65L1439.01 333.39L1439.58 330.13L1439.99 326.87L1440.24 323.61L1440.32 320.35L1440.24 317.09L1439.99 313.83L1439.58 310.57L1439.01 307.31L1438.27 304.05L1437.37 300.79L1436.31 297.53L1435.09 294.27L1433.7 291.01L1432.15 287.75L1430.44 284.49L1428.57 281.23L1426.53 277.97L1424.34 274.71L1421.99 271.45L1419.48 268.19L1416.82 264.93L1413.99 261.67L1411.01 258.41L1407.88 255.15L1404.59 251.89L1401.15 248.63L1397.56 245.37L1393.82 242.11L1389.92 238.85L1385.88 235.59L1381.69 232.33L1377.36 229.07L1372.88 225.81L1368.26 222.55L1363.49 219.29L1358.59 216.03L1353.54 212.77L1348.36 209.51L1343.04 206.25L1337.59 202.99L1332.01 199.73L1326.29 196.47L1320.45 193.21L1314.48 189.95L1308.38 186.69L1302.16 183.43L1295.82 180.17L1289.35 176.91L1282.77 173.65L1276.08 170.39L1269.27 167.13L1262.35 163.87L1255.31 160.61L1248.18 157.35L1240.93 154.09L1233.58 150.83L1226.14 147.57L1218.59 144.31L1210.95 141.05L1203.21 137.79L1195.38 134.53L1187.46 131.27L1179.46 128.01L1171.37 124.75L1163.2 121.49L1154.95 118.23L1146.62 114.97L1138.22 111.71L1129.75 108.45L1121.2 105.19L1112.59 101.93L1103.92 98.67L1095.19 95.41L1086.39 92.15L1077.54 88.89L1068.64 85.63L1059.69 82.37L1050.69 79.11L1041.64 75.85L1032.55 72.59L1023.42 69.33L1014.26 66.07L1005.06 62.81L995.83 59.55L986.57 56.29L977.28 53.03L967.97 49.77L958.65 46.51L949.3 43.25L939.94 39.99L930.57 36.73L921.19 33.47L911.81 30.21L902.42 26.95" fill="none" stroke="#808080" stroke-width="2.083" stroke-dasharray="2.083 3.437" stroke-linejoin="round" clip-path="url(#c0)"/>
<path d="M902.42 613.75L910.95 610.49L919.49 607.23L928.01 603.97L936.53 600.71L945.04 597.45L953.53 594.19L962.01 590.93L970.48 587.67L978.92 584.41L987.33 581.15L995.73 577.89L1004.09 574.63L1012.42 571.37L1020.72 568.11L1028.98 564.85L1037.21 561.59L1045.39 558.33L1053.53 555.07L1061.62 551.81L1069.67 548.55L1077.66 545.29L1085.6 542.03L1093.49 538.77L1101.31 535.51L1109.08 532.25L1116.78 528.99L1124.42 525.73L1131.99 522.47L1139.49 519.21L1146.92 515.95L1154.27 512.69L1161.55 509.43L1168.75 506.17L1175.87 502.91L1182.9 499.65L1189.85 496.39L1196.71 493.13L1203.48 489.87L1210.16 486.61L1216.74 483.35L1223.23 480.09L1229.62 476.83L1235.92 473.57L1242.11 470.31L1248.2 467.05L1254.18 463.79L1260.05 460.53L1265.82 457.27L1271.47 454.01L1277.02 450.75L1282.44 447.49L1287.76 444.23L1292.95 440.97L1298.03 437.71L1302.99 434.45L1307.82 431.19L1312.53 427.93L1317.12 424.67L1321.57 421.41L1325.91 418.15L1330.11 414.89L1334.18 411.63L1338.12 408.37L1341.93 405.11L1345.6 401.85L1349.14 398.59L1352.55 395.33L1355.81 392.07L1358.94 388.81L1361.93 385.55L1364.78 382.29L1367.49 379.03L1370.05 375.77L1372.48 372.51L1374.76 369.25L1376.89 365.99L1378.89 362.73L1380.73 359.47L1382.44 356.21L1383.99 352.95L1385.4 349.69L1386.66 346.43L1387.78 343.17L1388.74 339.91L1389.56 336.65L1390.23 333.39L1390.75 330.13L1391.12 326.87L1391.35 323.61L1391.42 320.35L1391.35 317.09L1391.12 313.83L1390.75 310.57L1390.23 307.31L1389.56 304.05L1388.74 300.79L1387.78 297.53L1386.66 294.27L1385.4 291.01L1383.99 287.75L1382.44 284.49L1380.73 281.23L1378.89 277.97L1376.89 274.71L1374.76 271.45L1372.48 268.19L1370.05 264.93L1367.49 261.67L1364.78 258.41L1361.93 255.15L1358.94 251.89L1355.81 248.63L1352.55 245.37L1349.14 242.11L1345.6 238.85L1341.93 235.59L1338.12 232.33L1334.18 229.07L1330.11 225.81L1325.91 222.55L1321.57 219.29L1317.12 216.03L1312.53 212.77L1307.82 209.51L1302.99 206.25L1298.03 202.99L1292.95 199.73L1287.76 196.47L1282.44 193.21L1277.02 189.95L1271.47 186.69L1265.82 183.43L1260.05 180.17L1254.18 176.91L1248.2 173.65L1242.11 170.39L1235.92 167.13L1229.62 163.87L1223.23 160.61L1216.74 157.35L1210.16 154.09L1203.48 150.83L1196.71 147.57L1189.85 144.31L1182.9 141.05L1175.87 137.79L1168.75 134.53L1161.55 131.27L1154.27 128.01L1146.92 124.75L1139.49 121.49L1131.99 118.23L1124.42 114.97L1116.78 111.71L1109.08 108.45L1101.31 105.19L1093.49 101.93L1085.6 98.67L1077.66 95.41L1069.67 92.15L1061.62 88.89L1053.53 85.63L1045.39 82.37L1037.21 79.11L1028.98 75.85L1020.72 72.59L1012.42 69.33L1004.09 66.07L995.73 62.81L987.33 59.55L978.92 56.29L970.48 53.03L962.01 49.77L953.53 46.51L945.04 43.25L936.53 39.99L928.01 36.73L919.49 33.47L910.95 30.21L902.42 26.95" fill="none" stroke="#808080" stroke-width="2.083" stroke-dasharray="2.083 3.437" stroke-linejoin="round" clip-path="url(#c0)"/>
<path d="M902.42 613.75L910.1 610.49L917.78 607.23L925.45 603.97L933.12 600.71L940.78 597.45L948.42 594.19L956.05 590.93L963.67 587.67L971.27 584.41L978.84 581.15L986.4 577.89L993.92 574.63L1001.42 571.37L1008.89 568.11L1016.33 564.85L1023.73 561.59L1031.09 558.33L1038.42 555.07L1045.7 551.81L1052.94 548.55L1060.14 545.29L1067.28 542.03L1074.38 538.77L1081.42 535.51L1088.41 532.25L1095.35 528.99L1102.22 525.73L1109.03 522.47L1115.78 519.21L1122.47 515.95L1129.09 512.69L1135.64 509.43L1142.12 506.17L1148.52 502.91L1154.85 499.65L1161.1 496.39L1167.28 493.13L1173.37 489.87L1179.38 486.61L1185.31 483.35L1191.15 480.09L1196.9 476.83L1202.57 473.57L1208.14 470.31L1213.62 467.05L1219 463.79L1224.29 460.53L1229.48 457.27L1234.57 454.01L1239.56 450.75L1244.44 447.49L1249.22 444.23L1253.9 440.97L1258.47 437.71L1262.93 434.45L1267.28 431.19L1271.52 427.93L1275.65 424.67L1279.66 421.41L1283.56 418.15L1287.34 414.89L1291.01 411.63L1294.55 408.37L1297.98 405.11L1301.29 401.85L1304.47 398.59L1307.53 395.33L1310.47 392.07L1313.29 388.81L1315.98 385.55L1318.54 382.29L1320.98 379.03L1323.29 375.77L1325.47 372.51L1327.52 369.25L1329.45 365.99L1331.24 362.73L1332.9 359.47L1334.43 356.21L1335.83 352.95L1337.1 349.69L1338.24 346.43L1339.24 343.17L1340.11 339.91L1340.85 336.65L1341.45 333.39L1341.92 330.13L1342.25 326.87L1342.45 323.61L1342.52 320.35L1342.45 317.09L1342.25 313.83L1341.92 310.57L1341.45 307.31L1340.85 304.05L1340.11 300.79L1339.24 297.53L1338.24 294.27L1337.1 291.01L1335.83 287.75L1334.43 284.49L1332.9 281.23L1331.24 277.97L1329.45 274.71L1327.52 271.45L1325.47 268.19L1323.29 264.93L1320.98 261.67L1318.54 258.41L1315.98 255.15L1313.29 251.89L1310.47 248.63L1307.53 245.37L1304.47 242.11L1301.29 238.85L1297.98 235.59L1294.55 232.33L1291.01 229.07L1287.34 225.81L1283.56 222.55L1279.66 219.29L1275.65 216.03L1271.52 212.77L1267.28 209.51L1262.93 206.25L1258.47 202.99L1253.9 199.73L1249.22 196.47L1244.44 193.21L1239.56 189.95L1234.57 186.69L1229.48 183.43L1224.29 180.17L1219 176.91L1213.62 173.65L1208.14 170.39L1202.57 167.13L1196.9 163.87L1191.15 160.61L1185.31 157.35L1179.38 154.09L1173.37 150.83L1167.28 147.57L1161.1 144.31L1154.85 141.05L1148.52 137.79L1142.12 134.53L1135.64 131.27L1129.09 128.01L1122.47 124.75L1115.78 121.49L1109.03 118.23L1102.22 114.97L1095.35 111.71L1088.41 108.45L1081.42 105.19L1074.38 101.93L1067.28 98.67L1060.14 95.41L1052.94 92.15L1045.7 88.89L1038.42 85.63L1031.09 82.37L1023.73 79.11L1016.33 75.85L1008.89 72.59L1001.42 69.33L993.92 66.07L986.4 62.81L978.84 59.55L971.27 56.29L963.67 53.03L956.05 49.77L948.42 46.51L940.78 43.25L933.12 39.99L925.45 36.73L917.78 33.47L910.1 30.21L902.42 26.95" fill="none" stroke="#808080" stroke-width="2.083" stroke-dasharray="2.083 3.437" stroke-linejoin="round" clip-path="url(#c0)"/>
<path d="M902.42 613.75L909.25 610.49L916.07 607.23L922.89 603.97L929.71 600.71L936.52 597.45L943.31 594.19L950.1 590.93L956.86 587.67L963.62 584.41L970.35 581.15L977.06 577.89L983.76 574.63L990.42 571.37L997.06 568.11L1003.67 564.85L1010.25 561.59L1016.8 558.33L1023.31 555.07L1029.78 551.81L1036.22 548.55L1042.61 545.29L1048.97 542.03L1055.27 538.77L1061.54 535.51L1067.75 532.25L1073.91 528.99L1080.02 525.73L1086.08 522.47L1092.08 519.21L1098.02 515.95L1103.9 512.69L1109.72 509.43L1115.48 506.17L1121.18 502.91L1126.8 499.65L1132.36 496.39L1137.85 493.13L1143.27 489.87L1148.61 486.61L1153.88 483.35L1159.07 480.09L1164.18 476.83L1169.22 473.57L1174.17 470.31L1179.04 467.05L1183.83 463.79L1188.53 460.53L1193.14 457.27L1197.66 454.01L1202.1 450.75L1206.44 447.49L1210.69 444.23L1214.85 440.97L1218.91 437.71L1222.87 434.45L1226.74 431.19L1230.51 427.93L1234.18 424.67L1237.74 421.41L1241.21 418.15L1244.57 414.89L1247.83 411.63L1250.98 408.37L1254.03 405.11L1256.97 401.85L1259.8 398.59L1262.52 395.33L1265.13 392.07L1267.64 388.81L1270.03 385.55L1272.31 382.29L1274.47 379.03L1276.53 375.77L1278.47 372.51L1280.29 369.25L1282 365.99L1283.59 362.73L1285.07 359.47L1286.43 356.21L1287.68 352.95L1288.8 349.69L1289.81 346.43L1290.7 343.17L1291.48 339.91L1292.13 336.65L1292.67 333.39L1293.08 330.13L1293.38 326.87L1293.56 323.61L1293.62 320.35L1293.56 317.09L1293.38 313.83L1293.08 310.57L1292.67 307.31L1292.13 304.05L1291.48 300.79L1290.7 297.53L1289.81 294.27L1288.8 291.01L1287.68 287.75L1286.43 284.49L1285.07 281.23L1283.59 277.97L1282 274.71L1280.29 271.45L1278.47 268.19L1276.53 264.93L1274.47 261.67L1272.31 258.41L1270.03 255.15L1267.64 251.89L1265.13 248.63L1262.52 245.37L1259.8 242.11L1256.97 238.85L1254.03 235.59L1250.98 232.33L1247.83 229.07L1244.57 225.81L1241.21 222.55L1237.74 219.29L1234.18 216.03L1230.51 212.77L1226.74 209.51L1222.87 206.25L1218.91 202.99L1214.85 199.73L1210.69 196.47L1206.44 193.21L1202.1 189.95L1197.66 186.69L1193.14 183.43L1188.53 180.17L1183.83 176.91L1179.04 173.65L1174.17 170.39L1169.22 167.13L1164.18 163.87L1159.07 160.61L1153.88 157.35L1148.61 154.09L1143.27 150.83L1137.85 147.57L1132.36 144.31L1126.8 141.05L1121.18 137.79L1115.48 134.53L1109.72 131.27L1103.9 128.01L1098.02 124.75L1092.08 121.49L1086.08 118.23L1080.02 114.97L1073.91 111.71L1067.75 108.45L1061.54 105.19L1055.27 101.93L1048.97 98.67L1042.61 95.41L1036.22 92.15L1029.78 88.89L1023.31 85.63L1016.8 82.37L1010.25 79.11L1003.67 75.85L997.06 72.59L990.42 69.33L983.76 66.07L977.06 62.81L970.35 59.55L963.62 56.29L956.86 53.03L950.1 49.77L943.31 46.51L936.52 43.25L929.71 39.99L922.89 36.73L916.07 33.47L909.25 30.21L902.42 26.95" fill="none" stroke="#808080" stroke-width="2.083" stroke-dasharray="2.083 3.437" stroke-linejoin="round" clip-path="url(#c0)"/>
<path d="M902.42 613.75L908.39 610.49L914.37 607.23L920.33 603.97L926.3 600.71L932.25 597.45L938.2 594.19L944.14 590.93L950.06 587.67L955.97 584.41L961.86 581.15L967.73 577.89L973.59 574.63L979.42 571.37L985.23 568.11L991.01 564.85L996.77 561.59L1002.5 558.33L1008.2 555.07L1013.86 551.81L1019.49 548.55L1025.09 545.29L1030.65 542.03L1036.17 538.77L1041.65 535.51L1047.08 532.25L1052.47 528.99L1057.82 525.73L1063.12 522.47L1068.37 519.21L1073.57 515.95L1078.72 512.69L1083.81 509.43L1088.85 506.17L1093.83 502.91L1098.76 499.65L1103.62 496.39L1108.42 493.13L1113.16 489.87L1117.84 486.61L1122.45 483.35L1126.99 480.09L1131.46 476.83L1135.87 473.57L1140.2 470.31L1144.46 467.05L1148.65 463.79L1152.76 460.53L1156.8 457.27L1160.76 454.01L1164.64 450.75L1168.44 447.49L1172.16 444.23L1175.79 440.97L1179.35 437.71L1182.82 434.45L1186.2 431.19L1189.5 427.93L1192.71 424.67L1195.83 421.41L1198.86 418.15L1201.8 414.89L1204.65 411.63L1207.41 408.37L1210.08 405.11L1212.65 401.85L1215.13 398.59L1217.51 395.33L1219.8 392.07L1221.98 388.81L1224.08 385.55L1226.07 382.29L1227.97 379.03L1229.76 375.77L1231.46 372.51L1233.06 369.25L1234.55 365.99L1235.95 362.73L1237.24 359.47L1238.43 356.21L1239.52 352.95L1240.51 349.69L1241.39 346.43L1242.17 343.17L1242.84 339.91L1243.42 336.65L1243.89 333.39L1244.25 330.13L1244.51 326.87L1244.67 323.61L1244.72 320.35L1244.67 317.09L1244.51 313.83L1244.25 310.57L1243.89 307.31L1243.42 304.05L1242.84 300.79L1242.17 297.53L1241.39 294.27L1240.51 291.01L1239.52 287.75L1238.43 284.49L1237.24 281.23L1235.95 277.97L1234.55 274.71L1233.06 271.45L1231.46 268.19L1229.76 264.93L1227.97 261.67L1226.07 258.41L1224.08 255.15L1221.98 251.89L1219.8 248.63L1217.51 245.37L1215.13 242.11L1212.65 238.85L1210.08 235.59L1207.41 232.33L1204.65 229.07L1201.8 225.81L1198.86 222.55L1195.83 219.29L1192.71 216.03L1189.5 212.77L1186.2 209.51L1182.82 206.25L1179.35 202.99L1175.79 199.73L1172.16 196.47L1168.44 193.21L1164.64 189.95L1160.76 186.69L1156.8 183.43L1152.76 180.17L1148.65 176.91L1144.46 173.65L1140.2 170.39L1135.87 167.13L1131.46 163.87L1126.99 160.61L1122.45 157.35L1117.84 154.09L1113.16 150.83L1108.42 147.57L1103.62 144.31L1098.76 141.05L1093.83 137.79L1088.85 134.53L1083.81 131.27L1078.72 128.01L1073.57 124.75L1068.37 121.49L1063.12 118.23L1057.82 114.97L1052.47 111.71L1047.08 108.45L1041.65 105.19L1036.17 101.93L1030.65 98.67L1025.09 95.41L1019.49 92.15L1013.86 88.89L1008.2 85.63L1002.5 82.37L996.77 79.11L991.01 75.85L985.23 72.59L979.42 69.33L973.59 66.07L967.73 62.81L961.86 59.55L955.97 56.29L950.06 53.03L944.14 49.77L938.2 46.51L932.25 43.25L926.3 39.99L920.33 36.73L914.37 33.47L908.39 30.21L902.42 26.95" fill="none" stroke="#808080" stroke-width="2.083" stroke-dasharray="2.083 3.437" stroke-linejoin="round" clip-path="url(#c0)"/>
<path d="M902.42 613.75L907.54 610.49L912.66 607.23L917.78 603.97L922.89 600.71L927.99 597.45L933.09 594.19L938.18 590.93L943.25 587.67L948.32 584.41L953.37 581.15L958.4 577.89L963.42 574.63L968.42 571.37L973.4 568.11L978.36 564.85L983.29 561.59L988.2 558.33L993.09 555.07L997.94 551.81L1002.77 548.55L1007.57 545.29L1012.33 542.03L1017.06 538.77L1021.76 535.51L1026.42 532.25L1031.04 528.99L1035.62 525.73L1040.16 522.47L1044.66 519.21L1049.12 515.95L1053.53 512.69L1057.9 509.43L1062.22 506.17L1066.49 502.91L1070.71 499.65L1074.88 496.39L1078.99 493.13L1083.06 489.87L1087.06 486.61L1091.01 483.35L1094.91 480.09L1098.74 476.83L1102.52 473.57L1106.23 470.31L1109.89 467.05L1113.47 463.79L1117 460.53L1120.46 457.27L1123.85 454.01L1127.18 450.75L1130.43 447.49L1133.62 444.23L1136.74 440.97L1139.79 437.71L1142.76 434.45L1145.66 431.19L1148.49 427.93L1151.24 424.67L1153.91 421.41L1156.51 418.15L1159.03 414.89L1161.48 411.63L1163.84 408.37L1166.13 405.11L1168.33 401.85L1170.45 398.59L1172.5 395.33L1174.46 392.07L1176.33 388.81L1178.13 385.55L1179.84 382.29L1181.46 379.03L1183 375.77L1184.45 372.51L1185.82 369.25L1187.1 365.99L1188.3 362.73L1189.41 359.47L1190.43 356.21L1191.36 352.95L1192.21 349.69L1192.96 346.43L1193.63 343.17L1194.21 339.91L1194.7 336.65L1195.11 333.39L1195.42 330.13L1195.64 326.87L1195.78 323.61L1195.82 320.35L1195.78 317.09L1195.64 313.83L1195.42 310.57L1195.11 307.31L1194.7 304.05L1194.21 300.79L1193.63 297.53L1192.96 294.27L1192.21 291.01L1191.36 287.75L1190.43 284.49L1189.41 281.23L1188.3 277.97L1187.1 274.71L1185.82 271.45L1184.45 268.19L1183 264.93L1181.46 261.67L1179.84 258.41L1178.13 255.15L1176.33 251.89L1174.46 248.63L1172.5 245.37L1170.45 242.11L1168.33 238.85L1166.13 235.59L1163.84 232.33L1161.48 229.07L1159.03 225.81L1156.51 222.55L1153.91 219.29L1151.24 216.03L1148.49 212.77L1145.66 209.51L1142.76 206.25L1139.79 202.99L1136.74 199.73L1133.62 196.47L1130.43 193.21L1127.18 189.95L1123.85 186.69L1120.46 183.43L1117 180.17L1113.47 176.91L1109.89 173.65L1106.23 170.39L1102.52 167.13L1098.74 163.87L1094.91 160.61L1091.01 157.35L1087.06 154.09L1083.06 150.83L1078.99 147.57L1074.88 144.31L1070.71 141.05L1066.49 137.79L1062.22 134.53L1057.9 131.27L1053.53 128.01L1049.12 124.75L1044.66 121.49L1040.16 118.23L1035.62 114.97L1031.04 111.71L1026.42 108.45L1021.76 105.19L1017.06 101.93L1012.33 98.67L1007.57 95.41L1002.77 92.15L997.94 88.89L993.09 85.63L988.2 82.37L983.29 79.11L978.36 75.85L973.4 72.59L968.42 69.33L963.42 66.07L958.4 62.81L953.37 59.55L948.32 56.29L943.25 53.03L938.18 49.77L933.09 46.51L927.99 43.25L922.89 39.99L917.78 36.73L912.66 33.47L907.54 30.21L902.42 26.95" fill="none" stroke="#808080" stroke-width="2.083" stroke-dasharray="2.083 3.437" stroke-linejoin="round" clip-path="url(#c0)"/>
<path d="M902.42 613.75L906.69 610.49L910.95 607.23L915.22 603.97L919.48 600.71L923.73 597.45L927.98 594.19L932.22 590.93L936.45 587.67L940.67 584.41L944.88 581.15L949.07 577.89L953.25 574.63L957.42 571.37L961.57 568.11L965.7 564.85L969.81 561.59L973.9 558.33L977.97 555.07L982.02 551.81L986.04 548.55L990.04 545.29L994.01 542.03L997.95 538.77L1001.87 535.51L1005.75 532.25L1009.6 528.99L1013.42 525.73L1017.21 522.47L1020.96 519.21L1024.67 515.95L1028.35 512.69L1031.99 509.43L1035.58 506.17L1039.14 502.91L1042.66 499.65L1046.13 496.39L1049.56 493.13L1052.95 489.87L1056.29 486.61L1059.58 483.35L1062.83 480.09L1066.02 476.83L1069.17 473.57L1072.26 470.31L1075.31 467.05L1078.3 463.79L1081.24 460.53L1084.12 457.27L1086.95 454.01L1089.72 450.75L1092.43 447.49L1095.09 444.23L1097.69 440.97L1100.22 437.71L1102.7 434.45L1105.12 431.19L1107.47 427.93L1109.77 424.67L1112 421.41L1114.16 418.15L1116.26 414.89L1118.3 411.63L1120.27 408.37L1122.18 405.11L1124.01 401.85L1125.78 398.59L1127.48 395.33L1129.12 392.07L1130.68 388.81L1132.17 385.55L1133.6 382.29L1134.95 379.03L1136.24 375.77L1137.45 372.51L1138.59 369.25L1139.66 365.99L1140.65 362.73L1141.58 359.47L1142.43 356.21L1143.21 352.95L1143.91 349.69L1144.54 346.43L1145.1 343.17L1145.58 339.91L1145.99 336.65L1146.32 333.39L1146.58 330.13L1146.77 326.87L1146.88 323.61L1146.92 320.35L1146.88 317.09L1146.77 313.83L1146.58 310.57L1146.32 307.31L1145.99 304.05L1145.58 300.79L1145.1 297.53L1144.54 294.27L1143.91 291.01L1143.21 287.75L1142.43 284.49L1141.58 281.23L1140.65 277.97L1139.66 274.71L1138.59 271.45L1137.45 268.19L1136.24 264.93L1134.95 261.67L1133.6 258.41L1132.17 255.15L1130.68 251.89L1129.12 248.63L1127.48 245.37L1125.78 242.11L1124.01 238.85L1122.18 235.59L1120.27 232.33L1118.3 229.07L1116.26 225.81L1114.16 222.55L1112 219.29L1109.77 216.03L1107.47 212.77L1105.12 209.51L1102.7 206.25L1100.22 202.99L1097.69 199.73L1095.09 196.47L1092.43 193.21L1089.72 189.95L1086.95 186.69L1084.12 183.43L1081.24 180.17L1078.3 176.91L1075.31 173.65L1072.26 170.39L1069.17 167.13L1066.02 163.87L1062.83 160.61L1059.58 157.35L1056.29 154.09L1052.95 150.83L1049.56 147.57L1046.13 144.31L1042.66 141.05L1039.14 137.79L1035.58 134.53L1031.99 131.27L1028.35 128.01L1024.67 124.75L1020.96 121.49L1017.21 118.23L1013.42 114.97L1009.6 111.71L1005.75 108.45L1001.87 105.19L997.95 101.93L994.01 98.67L990.04 95.41L986.04 92.15L982.02 88.89L977.97 85.63L973.9 82.37L969.81 79.11L965.7 75.85L961.57 72.59L957.42 69.33L953.25 66.07L949.07 62.81L944.88 59.55L940.67 56.29L936.45 53.03L932.22 49.77L927.98 46.51L923.73 43.25L919.48 39.99L915.22 36.73L910.95 33.47L906.69 30.21L902.42 26.95" fill="none" stroke="#808080" stroke-width="2.083" stroke-dasharray="2.083 3.437" stroke-linejoin="round" clip-path="url(#c0)"/>
<path d="M902.42 613.75L905.83 610.49L909.25 607.23L912.66 603.97L916.06 600.71L919.47 597.45L922.87 594.19L926.26 590.93L929.64 587.67L933.02 584.41L936.39 581.15L939.74 577.89L943.09 574.63L946.42 571.37L949.74 568.11L953.05 564.85L956.33 561.59L959.61 558.33L962.86 555.07L966.1 551.81L969.32 548.55L972.52 545.29L975.69 542.03L978.85 538.77L981.98 535.51L985.08 532.25L988.17 528.99L991.22 525.73L994.25 522.47L997.25 519.21L1000.22 515.95L1003.16 512.69L1006.07 509.43L1008.95 506.17L1011.8 502.91L1014.61 499.65L1017.39 496.39L1020.14 493.13L1022.84 489.87L1025.52 486.61L1028.15 483.35L1030.75 480.09L1033.3 476.83L1035.82 473.57L1038.3 470.31L1040.73 467.05L1043.12 463.79L1045.47 460.53L1047.78 457.27L1050.04 454.01L1052.26 450.75L1054.43 447.49L1056.55 444.23L1058.63 440.97L1060.66 437.71L1062.65 434.45L1064.58 431.19L1066.46 427.93L1068.3 424.67L1070.08 421.41L1071.81 418.15L1073.5 414.89L1075.12 411.63L1076.7 408.37L1078.22 405.11L1079.69 401.85L1081.11 398.59L1082.47 395.33L1083.78 392.07L1085.03 388.81L1086.22 385.55L1087.36 382.29L1088.45 379.03L1089.47 375.77L1090.44 372.51L1091.36 369.25L1092.21 365.99L1093.01 362.73L1093.75 359.47L1094.43 356.21L1095.05 352.95L1095.61 349.69L1096.12 346.43L1096.56 343.17L1096.95 339.91L1097.28 336.65L1097.54 333.39L1097.75 330.13L1097.9 326.87L1097.99 323.61L1098.02 320.35L1097.99 317.09L1097.9 313.83L1097.75 310.57L1097.54 307.31L1097.28 304.05L1096.95 300.79L1096.56 297.53L1096.12 294.27L1095.61 291.01L1095.05 287.75L1094.43 284.49L1093.75 281.23L1093.01 277.97L1092.21 274.71L1091.36 271.45L1090.44 268.19L1089.47 264.93L1088.45 261.67L1087.36 258.41L1086.22 255.15L1085.03 251.89L1083.78 248.63L1082.47 245.37L1081.11 242.11L1079.69 238.85L1078.22 235.59L1076.7 232.33L1075.12 229.07L1073.5 225.81L1071.81 222.55L1070.08 219.29L1068.3 216.03L1066.46 212.77L1064.58 209.51L1062.65 206.25L1060.66 202.99L1058.63 199.73L1056.55 196.47L1054.43 193.21L1052.26 189.95L1050.04 186.69L1047.78 183.43L1045.47 180.17L1043.12 176.91L1040.73 173.65L1038.3 170.39L1035.82 167.13L1033.3 163.87L1030.75 160.61L1028.15 157.35L1025.52 154.09L1022.84 150.83L1020.14 147.57L1017.39 144.31L1014.61 141.05L1011.8 137.79L1008.95 134.53L1006.07 131.27L1003.16 128.01L1000.22 124.75L997.25 121.49L994.25 118.23L991.22 114.97L988.17 111.71L985.08 108.45L981.98 105.19L978.85 101.93L975.69 98.67L972.52 95.41L969.32 92.15L966.1 88.89L962.86 85.63L959.61 82.37L956.33 79.11L953.05 75.85L949.74 72.59L946.42 69.33L943.09 66.07L939.74 62.81L936.39 59.55L933.02 56.29L929.64 53.03L926.26 49.77L922.87 46.51L919.47 43.25L916.06 39.99L912.66 36.73L909.25 33.47L905.83 30.21L902.42 26.95" fill="none" stroke="#808080" stroke-width="2.083" stroke-dasharray="2.083 3.437" stroke-linejoin="round" clip-path="url(#c0)"/>
<path d="M902.42 613.75L904.98 610.49L907.54 607.23L910.1 603.97L912.65 600.71L915.21 597.45L917.75 594.19L920.3 590.93L922.84 587.67L925.37 584.41L927.89 581.15L930.41 577.89L932.92 574.63L935.42 571.37L937.91 568.11L940.39 564.85L942.86 561.59L945.31 558.33L947.75 555.07L950.18 551.81L952.59 548.55L954.99 545.29L957.37 542.03L959.74 538.77L962.09 535.51L964.42 532.25L966.73 528.99L969.02 525.73L971.29 522.47L973.54 519.21L975.77 515.95L977.98 512.69L980.16 509.43L982.32 506.17L984.45 502.91L986.56 499.65L988.65 496.39L990.71 493.13L992.74 489.87L994.74 486.61L996.72 483.35L998.66 480.09L1000.58 476.83L1002.47 473.57L1004.33 470.31L1006.15 467.05L1007.95 463.79L1009.71 460.53L1011.44 457.27L1013.14 454.01L1014.8 450.75L1016.43 447.49L1018.02 444.23L1019.58 440.97L1021.1 437.71L1022.59 434.45L1024.04 431.19L1025.45 427.93L1026.83 424.67L1028.17 421.41L1029.47 418.15L1030.73 414.89L1031.95 411.63L1033.13 408.37L1034.27 405.11L1035.38 401.85L1036.44 398.59L1037.46 395.33L1038.44 392.07L1039.38 388.81L1040.27 385.55L1041.13 382.29L1041.94 379.03L1042.71 375.77L1043.44 372.51L1044.12 369.25L1044.76 365.99L1045.36 362.73L1045.91 359.47L1046.42 356.21L1046.89 352.95L1047.31 349.69L1047.69 346.43L1048.03 343.17L1048.32 339.91L1048.56 336.65L1048.76 333.39L1048.92 330.13L1049.03 326.87L1049.1 323.61L1049.12 320.35L1049.1 317.09L1049.03 313.83L1048.92 310.57L1048.76 307.31L1048.56 304.05L1048.32 300.79L1048.03 297.53L1047.69 294.27L1047.31 291.01L1046.89 287.75L1046.42 284.49L1045.91 281.23L1045.36 277.97L1044.76 274.71L1044.12 271.45L1043.44 268.19L1042.71 264.93L1041.94 261.67L1041.13 258.41L1040.27 255.15L1039.38 251.89L1038.44 248.63L1037.46 245.37L1036.44 242.11L1035.38 238.85L1034.27 235.59L1033.13 232.33L1031.95 229.07L1030.73 225.81L1029.47 222.55L1028.17 219.29L1026.83 216.03L1025.45 212.77L1024.04 209.51L1022.59 206.25L1021.1 202.99L1019.58 199.73L1018.02 196.47L1016.43 193.21L1014.8 189.95L1013.14 186.69L1011.44 183.43L1009.71 180.17L1007.95 176.91L1006.15 173.65L1004.33 170.39L1002.47 167.13L1000.58 163.87L998.66 160.61L996.72 157.35L994.74 154.09L992.74 150.83L990.71 147.57L988.65 144.31L986.56 141.05L984.45 137.79L982.32 134.53L980.16 131.27L977.98 128.01L975.77 124.75L973.54 121.49L971.29 118.23L969.02 114.97L966.73 111.71L964.42 108.45L962.09 105.19L959.74 101.93L957.37 98.67L954.99 95.41L952.59 92.15L950.18 88.89L947.75 85.63L945.31 82.37L942.86 79.11L940.39 75.85L937.91 72.59L935.42 69.33L932.92 66.07L930.41 62.81L927.89 59.55L925.37 56.29L922.84 53.03L920.3 49.77L917.75 46.51L915.21 43.25L912.65 39.99L910.1 36.73L907.54 33.47L904.98 30.21L902.42 26.95" fill="none" stroke="#808080" stroke-width="2.083" stroke-dasharray="2.083 3.437" stroke-linejoin="round" clip-path="url(#c0)"/>
<path d="M902.42 613.75L904.13 610.49L905.83 607.23L907.54 603.97L909.24 600.71L910.94 597.45L912.64 594.19L914.34 590.93L916.03 587.67L917.72 584.41L919.4 581.15L921.08 577.89L922.75 574.63L924.42 571.37L926.08 568.11L927.73 564.85L929.38 561.59L931.01 558.33L932.64 555.07L934.26 551.81L935.87 548.55L937.47 545.29L939.06 542.03L940.63 538.77L942.2 535.51L943.75 532.25L945.29 528.99L946.82 525.73L948.33 522.47L949.83 519.21L951.32 515.95L952.79 512.69L954.25 509.43L955.69 506.17L957.11 502.91L958.52 499.65L959.91 496.39L961.28 493.13L962.63 489.87L963.97 486.61L965.28 483.35L966.58 480.09L967.86 476.83L969.12 473.57L970.36 470.31L971.58 467.05L972.77 463.79L973.95 460.53L975.1 457.27L976.23 454.01L977.34 450.75L978.42 447.49L979.49 444.23L980.53 440.97L981.54 437.71L982.53 434.45L983.5 431.19L984.44 427.93L985.36 424.67L986.25 421.41L987.12 418.15L987.96 414.89L988.77 411.63L989.56 408.37L990.32 405.11L991.06 401.85L991.76 398.59L992.45 395.33L993.1 392.07L993.72 388.81L994.32 385.55L994.89 382.29L995.43 379.03L995.95 375.77L996.43 372.51L996.89 369.25L997.31 365.99L997.71 362.73L998.08 359.47L998.42 356.21L998.73 352.95L999.02 349.69L999.27 346.43L999.49 343.17L999.68 339.91L999.85 336.65L999.98 333.39L1000.09 330.13L1000.16 326.87L1000.21 323.61L1000.22 320.35L1000.21 317.09L1000.16 313.83L1000.09 310.57L999.98 307.31L999.85 304.05L999.68 300.79L999.49 297.53L999.27 294.27L999.02 291.01L998.73 287.75L998.42 284.49L998.08 281.23L997.71 277.97L997.31 274.71L996.89 271.45L996.43 268.19L995.95 264.93L995.43 261.67L994.89 258.41L994.32 255.15L993.72 251.89L993.1 248.63L992.45 245.37L991.76 242.11L991.06 238.85L990.32 235.59L989.56 232.33L988.77 229.07L987.96 225.81L987.12 222.55L986.25 219.29L985.36 216.03L984.44 212.77L983.5 209.51L982.53 206.25L981.54 202.99L980.53 199.73L979.49 196.47L978.42 193.21L977.34 189.95L976.23 186.69L975.1 183.43L973.95 180.17L972.77 176.91L971.58 173.65L970.36 170.39L969.12 167.13L967.86 163.87L966.58 160.61L965.28 157.35L963.97 154.09L962.63 150.83L961.28 147.57L959.91 144.31L958.52 141.05L957.11 137.79L955.69 134.53L954.25 131.27L952.79 128.01L951.32 124.75L949.83 121.49L948.33 118.23L946.82 114.97L945.29 111.71L943.75 108.45L942.2 105.19L940.63 101.93L939.06 98.67L937.47 95.41L935.87 92.15L934.26 88.89L932.64 85.63L931.01 82.37L929.38 79.11L927.73 75.85L926.08 72.59L924.42 69.33L922.75 66.07L921.08 62.81L919.4 59.55L917.72 56.29L916.03 53.03L914.34 49.77L912.64 46.51L910.94 43.25L909.24 39.99L907.54 36.73L905.83 33.47L904.13 30.21L902.42 26.95" fill="none" stroke="#808080" stroke-width="2.083" stroke-dasharray="2.083 3.437" stroke-linejoin="round" clip-path="url(#c0)"/>
<path d="M902.42 613.75L903.27 610.49L904.13 607.23L904.98 603.97L905.83 600.71L906.68 597.45L907.53 594.19L908.38 590.93L909.23 587.67L910.07 584.41L910.91 581.15L911.75 577.89L912.59 574.63L913.42 571.37L914.25 568.11L915.08 564.85L915.9 561.59L916.72 558.33L917.53 555.07L918.34 551.81L919.14 548.55L919.94 545.29L920.74 542.03L921.53 538.77L922.31 535.51L923.09 532.25L923.86 528.99L924.62 525.73L925.38 522.47L926.13 519.21L926.87 515.95L927.61 512.69L928.33 509.43L929.05 506.17L929.76 502.91L930.47 499.65L931.16 496.39L931.85 493.13L932.53 489.87L933.19 486.61L933.85 483.35L934.5 480.09L935.14 476.83L935.77 473.57L936.39 470.31L937 467.05L937.6 463.79L938.18 460.53L938.76 457.27L939.33 454.01L939.88 450.75L940.42 447.49L940.95 444.23L941.47 440.97L941.98 437.71L942.48 434.45L942.96 431.19L943.43 427.93L943.89 424.67L944.34 421.41L944.77 418.15L945.19 414.89L945.6 411.63L945.99 408.37L946.37 405.11L946.74 401.85L947.09 398.59L947.43 395.33L947.76 392.07L948.07 388.81L948.37 385.55L948.66 382.29L948.93 379.03L949.18 375.77L949.43 372.51L949.65 369.25L949.87 365.99L950.07 362.73L950.25 359.47L950.42 356.21L950.58 352.95L950.72 349.69L950.84 346.43L950.96 343.17L951.05 339.91L951.13 336.65L951.2 333.39L951.25 330.13L951.29 326.87L951.31 323.61L951.32 320.35L951.31 317.09L951.29 313.83L951.25 310.57L951.2 307.31L951.13 304.05L951.05 300.79L950.96 297.53L950.84 294.27L950.72 291.01L950.58 287.75L950.42 284.49L950.25 281.23L950.07 277.97L949.87 274.71L949.65 271.45L949.43 268.19L949.18 264.93L948.93 261.67L948.66 258.41L948.37 255.15L948.07 251.89L947.76 248.63L947.43 245.37L947.09 242.11L946.74 238.85L946.37 235.59L945.99 232.33L945.6 229.07L945.19 225.81L944.77 222.55L944.34 219.29L943.89 216.03L943.43 212.77L942.96 209.51L942.48 206.25L941.98 202.99L941.47 199.73L940.95 196.47L940.42 193.21L939.88 189.95L939.33 186.69L938.76 183.43L938.18 180.17L937.6 176.91L937 173.65L936.39 170.39L935.77 167.13L935.14 163.87L934.5 160.61L933.85 157.35L933.19 154.09L932.53 150.83L931.85 147.57L931.16 144.31L930.47 141.05L929.76 137.79L929.05 134.53L928.33 131.27L927.61 128.01L926.87 124.75L926.13 121.49L925.38 118.23L924.62 114.97L923.86 111.71L923.09 108.45L922.31 105.19L921.53 101.93L920.74 98.67L919.94 95.41L919.14 92.15L918.34 88.89L917.53 85.63L916.72 82.37L915.9 79.11L915.08 75.85L914.25 72.59L913.42 69.33L912.59 66.07L911.75 62.81L910.91 59.55L910.07 56.29L909.23 53.03L908.38 49.77L907.53 46.51L906.68 43.25L905.83 39.99L904.98 36.73L904.13 33.47L903.27 30.21L902.42 26.95" fill="none" stroke="#808080" stroke-width="2.083" stroke-dasharray="2.083 3.437" stroke-linejoin="round" clip-path="url(#c0)"/>
<path d="M902.42 613.75L912.66 610.49L922.9 607.23L933.13 603.97L943.35 600.71L953.56 597.45L963.76 594.19L973.93 590.93L984.09 587.67L994.22 584.41L1004.32 581.15L1014.39 577.89L1024.42 574.63L1034.42 571.37L1044.38 568.11L1054.29 564.85L1064.16 561.59L1073.98 558.33L1083.75 555.07L1093.46 551.81L1103.12 548.55L1112.71 545.29L1122.24 542.03L1131.7 538.77L1141.09 535.51L1150.41 532.25L1159.66 528.99L1168.82 525.73L1177.91 522.47L1186.91 519.21L1195.82 515.95L1204.64 512.69L1213.38 509.43L1222.01 506.17L1230.55 502.91L1238.99 499.65L1247.33 496.39L1255.56 493.13L1263.69 489.87L1271.71 486.61L1279.61 483.35L1287.4 480.09L1295.07 476.83L1302.62 473.57L1310.05 470.31L1317.35 467.05L1324.53 463.79L1331.58 460.53L1338.5 457.27L1345.28 454.01L1351.93 450.75L1358.45 447.49L1364.82 444.23L1371.06 440.97L1377.15 437.71L1383.1 434.45L1388.9 431.19L1394.55 427.93L1400.05 424.67L1405.41 421.41L1410.6 418.15L1415.65 414.89L1420.53 411.63L1425.26 408.37L1429.83 405.11L1434.24 401.85L1438.49 398.59L1442.57 395.33L1446.49 392.07L1450.24 388.81L1453.83 385.55L1457.25 382.29L1460.5 379.03L1463.58 375.77L1466.49 372.51L1469.22 369.25L1471.79 365.99L1474.18 362.73L1476.4 359.47L1478.44 356.21L1480.3 352.95L1482 349.69L1483.51 346.43L1484.85 343.17L1486.01 339.91L1486.99 336.65L1487.79 333.39L1488.42 330.13L1488.86 326.87L1489.13 323.61L1489.22 320.35L1489.13 317.09L1488.86 313.83L1488.42 310.57L1487.79 307.31L1486.99 304.05L1486.01 300.79L1484.85 297.53L1483.51 294.27L1482 291.01L1480.3 287.75L1478.44 284.49L1476.4 281.23L1474.18 277.97L1471.79 274.71L1469.22 271.45L1466.49 268.19L1463.58 264.93L1460.5 261.67L1457.25 258.41L1453.83 255.15L1450.24 251.89L1446.49 248.63L1442.57 245.37L1438.49 242.11L1434.24 238.85L1429.83 235.59L1425.26 232.33L1420.53 229.07L1415.65 225.81L1410.6 222.55L1405.41 219.29L1400.05 216.03L1394.55 212.77L1388.9 209.51L1383.1 206.25L1377.15 202.99L1371.06 199.73L1364.82 196.47L1358.45 193.21L1351.93 189.95L1345.28 186.69L1338.5 183.43L1331.58 180.17L1324.53 176.91L1317.35 173.65L1310.05 170.39L1302.62 167.13L1295.07 163.87L1287.4 160.61L1279.61 157.35L1271.71 154.09L1263.69 150.83L1255.56 147.57L1247.33 144.31L1238.99 141.05L1230.55 137.79L1222.01 134.53L1213.38 131.27L1204.64 128.01L1195.82 124.75L1186.91 121.49L1177.91 118.23L1168.82 114.97L1159.66 111.71L1150.41 108.45L1141.09 105.19L1131.7 101.93L1122.24 98.67L1112.71 95.41L1103.12 92.15L1093.46 88.89L1083.75 85.63L1073.98 82.37L1064.16 79.11L1054.29 75.85L1044.38 72.59L1034.42 69.33L1024.42 66.07L1014.39 62.81L1004.32 59.55L994.22 56.29L984.09 53.03L973.93 49.77L963.76 46.51L953.56 43.25L943.35 39.99L933.13 36.73L922.9 33.47L912.66 30.21L902.42 26.95" fill="none" stroke="#808080" stroke-width="2.083" stroke-dasharray="2.083 3.437" stroke-linejoin="round" clip-path="url(#c0)"/>
<path d="M902 614L902 614L902 614L902 614L902 614L902 614L902 614L902 614L902 614L902 614L902 614L902 614L902 614" fill="none" stroke="#808080" stroke-width="2.083" stroke-dasharray="2.083 3.437" stroke-linejoin="round" clip-path="url(#c0)"/>
<path d="M902 614L902 614L902 614L902 614L902 614L902 614L902 614L902 614L902 614L902 614L902 614L902 614L902 614" fill="none" stroke="#808080" stroke-width="2.083" stroke-dasharray="2.083 3.437" stroke-linejoin="round" clip-path="url(#c0)"/>
<path d="M902 565L890 565L877 565L864 565L852 565L839 565L826 565L814 565L801 565L789 565L776 565L763 565L751 565" fill="none" stroke="#808080" stroke-width="2.083" stroke-dasharray="2.083 3.437" stroke-linejoin="round" clip-path="url(#c0)"/>
<path d="M1054 565L1042 565L1029 565L1016 565L1004 565L991 565L978 565L966 565L953 565L940 565L928 565L915 565L902 565" fill="none" stroke="#808080" stroke-width="2.083" stroke-dasharray="2.083 3.437" stroke-linejoin="round" clip-path="url(#c0)"/>
<path d="M902 516L878 516L854 516L829 516L805 516L780 516L756 516L731 516L707 516L682 516L658 516L633 516L609 516" fill="none" stroke="#808080" stroke-width="2.083" stroke-dasharray="2.083 3.437" stroke-linejoin="round" clip-path="url(#c0)"/>
<path d="M1196 516L1171 516L1147 516L1122 516L1098 516L1074 516L1049 516L1025 516L1000 516L976 516L951 516L927 516L902 516" fill="none" stroke="#808080" stroke-width="2.083" stroke-dasharray="2.083 3.437" stroke-linejoin="round" clip-path="url(#c0)"/>
<path d="M902 467L868 467L833 467L799 467L764 467L730 467L695 467L660 467L626 467L591 467L557 467L522 467L487 467" fill="none" stroke="#808080" stroke-width="2.083" stroke-dasharray="2.083 3.437" stroke-linejoin="round" clip-path="url(#c0)"/>
<path d="M1317 467L1283 467L1248 467L1214 467L1179 467L1144 467L1110 467L1075 467L1041 467L1006 467L972 467L937 467L902 467" fill="none" stroke="#808080" stroke-width="2.083" stroke-dasharray="2.083 3.437" stroke-linejoin="round" clip-path="url(#c0)"/>
<path d="M902 418L860 418L818 418L775 418L733 418L691 418L648 418L606 418L564 418L521 418L479 418L437 418L394 418" fill="none" stroke="#808080" stroke-width="2.083" stroke-dasharray="2.083 3.437" stroke-linejoin="round" clip-path="url(#c0)"/>
<path d="M1411 418L1368 418L1326 418L1284 418L1241 418L1199 418L1157 418L1114 418L1072 418L1029 418L987 418L945 418L902 418" fill="none" stroke="#808080" stroke-width="2.083" stroke-dasharray="2.083 3.437" stroke-linejoin="round" clip-path="url(#c0)"/>
<path d="M902 369L855 369L808 369L761 369L713 369L666 369L619 369L572 369L525 369L477 369L430 369L383 369L336 369" fill="none" stroke="#808080" stroke-width="2.083" stroke-dasharray="2.083 3.437" stroke-linejoin="round" clip-path="url(#c0)"/>
<path d="M1469 369L1422 369L1375 369L1328 369L1280 369L1233 369L1186 369L1139 369L1091 369L1044 369L997 369L950 369L902 369" fill="none" stroke="#808080" stroke-width="2.083" stroke-dasharray="2.083 3.437" stroke-linejoin="round" clip-path="url(#c0)"/>
<path d="M902 320L854 320L805 320L756 320L707 320L658 320L609 320L560 320L511 320L462 320L413 320L365 320L316 320" fill="none" stroke="#808080" stroke-width="2.083" stroke-dasharray="2.083 3.437" stroke-linejoin="round" clip-path="url(#c0)"/>
<path d="M1489 320L1440 320L1391 320L1343 320L1294 320L1245 320L1196 320L1147 320L1098 320L1049 320L1000 320L951 320L902 320" fill="none" stroke="#808080" stroke-width="2.083" stroke-dasharray="2.083 3.437" stroke-linejoin="round" clip-path="url(#c0)"/>
<path d="M902 271L855 271L808 271L761 271L713 271L666 271L619 271L572 271L525 271L477 271L430 271L383 271L336 271" fill="none" stroke="#808080" stroke-width="2.083" stroke-dasharray="2.083 3.437" stroke-linejoin="round" clip-path="url(#c0)"/>
<path d="M1469 271L1422 271L1375 271L1328 271L1280 271L1233 271L1186 271L1139 271L1091 271L1044 271L997 271L950 271L902 271" fill="none" stroke="#808080" stroke-width="2.083" stroke-dasharray="2.083 3.437" stroke-linejoin="round" clip-path="url(#c0)"/>
<path d="M902 223L860 223L818 223L775 223L733 223L691 223L648 223L606 223L564 223L521 223L479 223L437 223L394 223" fill="none" stroke="#808080" stroke-width="2.083" stroke-dasharray="2.083 3.437" stroke-linejoin="round" clip-path="url(#c0)"/>
<path d="M1411 223L1368 223L1326 223L1284 223L1241 223L1199 223L1157 223L1114 223L1072 223L1029 223L987 223L945 223L902 223" fill="none" stroke="#808080" stroke-width="2.083" stroke-dasharray="2.083 3.437" stroke-linejoin="round" clip-path="url(#c0)"/>
<path d="M902 174L868 174L833 174L799 174L764 174L730 174L695 174L660 174L626 174L591 174L557 174L522 174L487 174" fill="none" stroke="#808080" stroke-width="2.083" stroke-dasharray="2.083 3.437" stroke-linejoin="round" clip-path="url(#c0)"/>
<path d="M1317 174L1283 174L1248 174L1214 174L1179 174L1144 174L1110 174L1075 174L1041 174L1006 174L972 174L937 174L902 174" fill="none" stroke="#808080" stroke-width="2.083" stroke-dasharray="2.083 3.437" stroke-linejoin="round" clip-path="url(#c0)"/>
<path d="M902 125L878 125L854 125L829 125L805 125L780 125L756 125L731 125L707 125L682 125L658 125L633 125L609 125" fill="none" stroke="#808080" stroke-width="2.083" stroke-dasharray="2.083 3.437" stroke-linejoin="round" clip-path="url(#c0)"/>
<path d="M1196 125L1171 125L1147 125L1122 125L1098 125L1074 125L1049 125L1025 125L1000 125L976 125L951 125L927 125L902 125" fill="none" stroke="#808080" stroke-width="2.083" stroke-dasharray="2.083 3.437" stroke-linejoin="round" clip-path="url(#c0)"/>
<path d="M902 76L890 76L877 76L864 76L852 76L839 76L826 76L814 76L801 76L789 76L776 76L763 76L751 76" fill="none" stroke="#808080" stroke-width="2.083" stroke-dasharray="2.083 3.437" stroke-linejoin="round" clip-path="url(#c0)"/>
<path d="M1054 76L1042 76L1029 76L1016 76L1004 76L991 76L978 76L966 76L953 76L940 76L928 76L915 76L902 76" fill="none" stroke="#808080" stroke-width="2.083" stroke-dasharray="2.083 3.437" stroke-linejoin="round" clip-path="url(#c0)"/>
<path d="M902 27L902 27L902 27L902 27L902 27L902 27L902 27L902 27L902 27L902 27L902 27L902 27L902 27" fill="none" stroke="#808080" stroke-width="2.083" stroke-dasharray="2.083 3.437" stroke-linejoin="round" clip-path="url(#c0)"/>
<path d="M902 27L902 27L902 27L902 27L902 27L902 27L902 27L902 27L902 27L902 27L902 27L902 27L902 27" fill="none" stroke="#808080" stroke-width="2.083" stroke-dasharray="2.083 3.437" stroke-linejoin="round" clip-path="url(#c0)"/>
<path d="M603.27 243.45L600.01 243.66L596.51 244.28L592.83 245.31L589.06 246.72L585.26 248.49L581.51 250.59L577.91 252.97L574.52 255.59L571.42 258.42L568.69 261.39L566.36 264.46L564.5 267.58L563.12 270.69L562.26 273.76L561.92 276.72L562.09 279.54L562.76 282.16L563.89 284.56L565.46 286.68L567.42 288.5L569.71 290L572.3 291.14L575.11 291.91L578.11 292.3L581.23 292.3L584.43 291.91L587.66 291.14L590.88 290L594.04 288.5L597.11 286.68L600.05 284.56L602.83 282.16L605.42 279.54L607.8 276.72L609.94 273.76L611.81 270.69L613.38 267.58L614.64 264.46L615.57 261.39L616.13 258.42L616.32 255.59L616.11 252.97L615.49 250.59L614.45 248.49L613 246.72L611.14 245.31L608.88 244.28L606.25 243.66L603.27 243.45" fill="none" stroke="#2ab07f" stroke-width="2.083" stroke-linecap="square" stroke-linejoin="round" clip-path="url(#c0)"/>
<path d="M589.43 267.41L591.02 267.2L592.61 267.01L594.2 266.81L595.79 266.62L597.37 266.43L598.96 266.24L600.54 266.06L602.13 265.88L603.71 265.71L605.29 265.54L606.86 265.37L608.44 265.21L610.01 265.05L611.59 264.89L613.16 264.74L614.73 264.59L616.3 264.44L617.86 264.3L619.43 264.16L620.99 264.03L622.56 263.9L624.12 263.77L625.67 263.65L627.23 263.53L628.79 263.42L630.34 263.31L631.89 263.2L633.44 263.09L634.99 262.99L636.54 262.9L638.09 262.81L639.63 262.72L641.17 262.63L642.71 262.55L644.25 262.47L645.79 262.4L647.32 262.33L648.86 262.27L650.39 262.21L651.92 262.15L653.45 262.1L654.98 262.05L656.5 262L658.03 261.96L659.55 261.92L661.07 261.89L662.59 261.86L664.1 261.83L665.62 261.81L667.13 261.79L668.65 261.78L670.16 261.77L671.67 261.76L673.17 261.76L674.68 261.76L676.18 261.77L677.69 261.78L679.19 261.79L680.69 261.81L682.19 261.83L683.68 261.85L685.18 261.88L686.67 261.92L688.17 261.95L689.66 261.99L691.15 262.04L692.63 262.09L694.12 262.14L695.61 262.2L697.09 262.26L698.57 262.32L700.05 262.39L701.53 262.46L703.01 262.54L704.49 262.62L705.97 262.7L707.44 262.79L708.92 262.88L710.39 262.98L711.86 263.08L713.33 263.18L714.8 263.29L716.27 263.4L717.73 263.51L719.2 263.63L720.66 263.75L722.13 263.88L723.59 264.01L725.05 264.14L726.51 264.28L727.97 264.42L729.43 264.56L730.88 264.71L732.34 264.86L733.8 265.02L735.25 265.18L736.71 265.34L738.16 265.51L739.61 265.68" fill="none" stroke="#2ab07f" stroke-width="1.389" stroke-dasharray="1.389 2.292" stroke-linejoin="round" clip-path="url(#c0)"/>
<path d="M589 267" fill="none" stroke="#ff0000" stroke-width="2.083" stroke-linecap="square" stroke-linejoin="round" clip-path="url(#c0)"/>
<path d="M586.5 267.5L592.5 267.5M589.5 270.5L589.5 264.5" fill="#ff0000" stroke="#ff0000" stroke-width="1.389" stroke-linejoin="round" clip-path="url(#c0)"/>
<text class="s" font-size="9.722px" x="890.04 898.04 904.04" y="624" fill="#808080">−90</text>
<text class="s" font-size="7.609px" x="911.85" y="619" fill="#808080">∘</text>
<text class="s" font-size="9.722px" x="890.06 898.06 904.06" y="526" fill="#808080">−60</text>
<text class="s" font-size="7.609px" x="911.85" y="521" fill="#808080">∘</text>
<text class="s" font-size="9.722px" x="889.92 897.92 903.92" y="428" fill="#808080">−30</text>
<text class="s" font-size="7.609px" x="911.85" y="423" fill="#808080">∘</text>
<text class="s" font-size="9.722px" x="892.98 900.98" y="330" fill="#808080">+0</text>
<text class="s" font-size="7.609px" x="907.75" y="325" fill="#808080">∘</text>
<text class="s" font-size="9.722px" x="890.1 898.1 904.1" y="221" fill="#808080">+30</text>
<text class="s" font-size="7.609px" x="911.85" y="216" fill="#808080">∘</text>
<text class="s" font-size="9.722px" x="889.97 897.97 903.97" y="123" fill="#808080">+60</text>
<text class="s" font-size="7.609px" x="911.85" y="118" fill="#808080">∘</text>
<text class="s" font-size="9.722px" x="890.02 898.02 904.02" y="25" fill="#808080">+90</text>
<text class="s" font-size="7.609px" x="911.85" y="20" fill="#808080">∘</text>
<text class="s" font-size="9.722px" x="792.02 800.02 806.02" y="330" fill="#808080">+30</text>
<text class="s" font-size="7.609px" x="813.81" y="325" fill="#808080">∘</text>
<text class="s" font-size="9.722px" x="694.1 702.1 708.1" y="330" fill="#808080">+60</text>
<text class="s" font-size="7.609px" x="715.82" y="325" fill="#808080">∘</text>
<text class="s" font-size="9.722px" x="596.1 604.1 610.1" y="330" fill="#808080">+90</text>
<text class="s" font-size="7.609px" x="617.77" y="325" fill="#808080">∘</text>
<text class="s" font-size="9.722px" x="496.24 504.24 510.24 516.24" y="330" fill="#808080">+120</text>
<text class="s" font-size="7.609px" x="523.75" y="325" fill="#808080">∘</text>
<text class="s" font-size="9.722px" x="398.01 406.01 412.01 418.01" y="330" fill="#808080">+150</text>
<text class="s" font-size="7.609px" x="425.71" y="325" fill="#808080">∘</text>
<text class="s" font-size="9.722px" x="300.16 308.16 314.16 320.16" y="330" fill="#808080">+180</text>
<text class="s" font-size="7.609px" x="327.72" y="325" fill="#808080">∘</text>
<text class="s" font-size="9.722px" x="1376.01 1384.01 1390.01 1396.01" y="330" fill="#808080">+210</text>
<text class="s" font-size="7.609px" x="1403.71" y="325" fill="#808080">∘</text>
<text class="s" font-size="9.722px" x="1278.13 1286.13 1292.13 1298.13" y="330" fill="#808080">+240</text>
<text class="s" font-size="7.609px" x="1305.72" y="325" fill="#808080">∘</text>
<text class="s" font-size="9.722px" x="1180.17 1188.17 1194.17 1200.17" y="330" fill="#808080">+270</text>
<text class="s" font-size="7.609px" x="1207.6" y="325" fill="#808080">∘</text>
<text class="s" font-size="9.722px" x="1082.29 1090.29 1096.29 1102.29" y="330" fill="#808080">+300</text>
<text class="s" font-size="7.609px" x="1109.55" y="325" fill="#808080">∘</text>
<text class="s" font-size="9.722px" x="985.12 993.12 999.12 1005.12" y="330" fill="#808080">+330</text>
<text class="s" font-size="7.609px" x="1012.75" y="325" fill="#808080">∘</text>
<text class="s" font-size="9.722px" x="1474.24 1482.24 1488.24 1494.24" y="330" fill="#808080">+180</text>
<text class="s" font-size="7.609px" x="1501.75" y="325" fill="#808080">∘</text>
<text class="m" font-size="13.889px" x="315.96 324.34 332.71 341.09 349.46 357.84" y="30" fill="#ffffff" fill-opacity="0.937">NL0006</text>
<text class="m" font-size="13.889px" x="315.82 324.19 332.57 340.94 349.32 357.69 366.07 374.44 382.82 391.19 399.57 407.94 416.32 424.69 433.07 441.44 449.82 458.19 466.57 474.94 483.32 491.69 500.07 508.44 516.82 525.19 533.57 541.94 550.32 558.69 567.07 575.44 583.82 592.19 600.57 608.94 617.32 625.69" y="43" fill="#ffffff" fill-opacity="0.924">Beg: 20251027 04:31:39 (sol = 213.66°)</text>
<text class="m" font-size="13.889px" x="315.82 324.19 332.57 340.94 349.32 357.69 366.07 374.44 382.82 391.19 399.57 407.94 416.32 424.69 433.07 441.44 449.82 458.19 466.57 474.94 483.32 491.69 500.07 508.44 516.82 525.19 533.57 541.94 550.32 558.69 567.07 575.44 583.82 592.19 600.57 608.94 617.32 625.69" y="57" fill="#ffffff" fill-opacity="0.922">End: 20251027 04:31:39 (sol = 213.66°)</text>
<text class="m" font-size="13.889px" x="315.96 323.34 331.71 340.09 348.46 356.84 365.21 373.59 381.96 390.34 398.71 407.09 415.46 423.84 432.21 440.59 448.96 457.34 465.71 474.09 482.46 490.84 499.21 507.59 515.96 524.34 532.71 541.09 549.46 557.84 566.21 574.59 582.96 591.34 599.71 608.09 616.46 624.84" y="69" fill="#ffffff" fill-opacity="0.889">--------------------------------------</text>
<text class="m" font-size="13.889px" x="316.05 324.42 332.8 341.17 349.55 357.92" y="82" fill="#ffffff" fill-opacity="0.919">ORI: 1</text>
<path d="M739.61 265.68L747 267.08" fill="none" stroke="#2ab07f" stroke-width="1.389" stroke-linecap="square" stroke-linejoin="round" clip-path="url(#c0)"/>
<text class="s" font-size="11.111px" x="580 587.75 595.5" y="271" fill="#ffffff" fill-opacity="0.911">ORI</text>
<text class="s" font-size="27.778px" transform="translate(149 697.11) rotate(-90)" x="0 18 34.75" fill="#ffffff" fill-opacity="0.289">APR</text>
<text class="s" font-size="27.778px" transform="translate(295 702.01) rotate(-90)" x="0 23 39.88" fill="#ffffff" fill-opacity="0.289">MAY</text>
<text class="s" font-size="27.778px" transform="translate(436 688.9) rotate(-90)" x="0 7.25 27.5" fill="#ffffff" fill-opacity="0.287">JUN</text>
<text class="s" font-size="27.778px" transform="translate(577 683.95) rotate(-90)" x="0 7.25 27.5" fill="#ffffff" fill-opacity="0.287">JUL</text>
<text class="s" font-size="27.778px" transform="translate(724 702.54) rotate(-90)" x="0 18 38.25" fill="#ffffff" fill-opacity="0.286">AUG</text>
<text class="s" font-size="27.778px" transform="translate(872 695.09) rotate(-90)" x="0 16.62 34.25" fill="#ffffff" fill-opacity="0.288">SEP</text>
<text class="s" font-size="27.778px" transform="translate(1017 700.98) rotate(-90)" x="0 20.75 40.12" fill="#ffffff" fill-opacity="0.286">OCT</text>
<text class="s" font-size="27.778px" transform="translate(1170 704.81) rotate(-90)" x="0 19.75 41" fill="#ffffff" fill-opacity="0.291">NOV</text>
<text class="s" font-size="27.778px" transform="translate(1319 701.89) rotate(-90)" x="0 20.38 38" fill="#ffffff" fill-opacity="0.281">DEC</text>
<text class="s" font-size="27.778px" transform="translate(1469 686.98) rotate(-90)" x="0 6.75 25.75" fill="#ffffff" fill-opacity="0.291">JAN</text>
<text class="s" font-size="27.778px" transform="translate(1628 696.82) rotate(-90)" x="0 15 32.62" fill="#ffffff" fill-opacity="0.28">FEB</text>
<text class="s" font-size="27.778px" transform="translate(1766 706.04) rotate(-90)" x="0 23 42" fill="#ffffff" fill-opacity="0.29">MAR</text>
<path d="M20.5 842.5L20.5 847.5" fill="#ffffff" stroke="#ffffff" stroke-width="1.111" stroke-linejoin="round"/>
<text class="s" font-size="13.889px" x="15.98" y="862" fill="#ffffff" fill-opacity="0.934">0</text>
<path d="M265.5 842.5L265.5 847.5" fill="#ffffff" stroke="#ffffff" stroke-width="1.111" stroke-linejoin="round"/>
<text class="s" font-size="13.889px" x="256.12 263.87" y="862" fill="#ffffff" fill-opacity="0.915">50</text>
<path d="M510.5 842.5L510.5 847.5" fill="#ffffff" stroke="#ffffff" stroke-width="1.111" stroke-linejoin="round"/>
<text class="s" font-size="13.889px" x="498.07 505.94 514.69" y="862" fill="#ffffff" fill-opacity="0.926">100</text>
<path d="M755.5 842.5L755.5 847.5" fill="#ffffff" stroke="#ffffff" stroke-width="1.111" stroke-linejoin="round"/>
<text class="s" font-size="13.889px" x="743.02 750.89 759.64" y="862" fill="#ffffff" fill-opacity="0.915">150</text>
<path d="M1000.5 842.5L1000.5 847.5" fill="#ffffff" stroke="#ffffff" stroke-width="1.111" stroke-linejoin="round"/>
<text class="s" font-size="13.889px" x="987.08 995.83 1004.58" y="862" fill="#ffffff" fill-opacity="0.92">200</text>
<path d="M1246.5 842.5L1246.5 847.5" fill="#ffffff" stroke="#ffffff" stroke-width="1.111" stroke-linejoin="round"/>
<text class="s" font-size="13.889px" x="1233.12 1241.87 1250.62" y="862" fill="#ffffff" fill-opacity="0.909">250</text>
<path d="M1491.5 842.5L1491.5 847.5" fill="#ffffff" stroke="#ffffff" stroke-width="1.111" stroke-linejoin="round"/>
<text class="s" font-size="13.889px" x="1478.26 1486.01 1494.76" y="862" fill="#ffffff" fill-opacity="0.913">300</text>
<path d="M1736.5 842.5L1736.5 847.5" fill="#ffffff" stroke="#ffffff" stroke-width="1.111" stroke-linejoin="round"/>
<text class="s" font-size="13.889px" x="1723.3 1731.05 1739.8" y="862" fill="#ffffff" fill-opacity="0.901">350</text>
<text class="s" font-size="13.889px" x="829 837.75 846.25 850.12 858.75 864.5 868.87 872.75 881.25 890 898.87 902.75 908.25 917 925.87 934.37 938.75 944.25 953.12 961.62 970.5" y="882" fill="#ffffff" fill-opacity="0.973">Solar longitude (deg)</text>
<path d="M1067.5 842.5L1067.5 791.5L1067.5 741.5L1067.5 691.5L1067.5 641.5" fill="none" stroke="#ff0000" stroke-width="1.389" stroke-dasharray="5.139 2.222" stroke-linejoin="round" clip-path="url(#c1)"/>
<path d="M1067.5 842.5L1067.5 791.5L1067.5 741.5L1067.5 691.5L1067.5 641.5" fill="none" stroke="#ff0000" stroke-width="1.389" stroke-dasharray="5.139 2.222" stroke-linejoin="round" clip-path="url(#c1)"/>
<rect x="19.944" y="640.944" width="1.111" height="202.111" fill="#ffffff"/>
<rect x="1784.944" y="640.944" width="1.111" height="202.111" fill="#ffffff"/>
<rect x="19.944" y="841.944" width="1766.111" height="1.111" fill="#ffffff"/>
<rect x="19.944" y="640.944" width="1766.111" height="1.111" fill="#ffffff"/>
<rect x="105.917" y="831.917" width="24.167" height="4.167" fill="#bddf26" clip-path="url(#c1)"/>
<text class="s" font-size="11.111px" x="106.84 113.09 120.22" y="832" fill="#ffffff" fill-opacity="0.893">KSE</text>
<rect x="164.917" y="831.917" width="180.167" height="4.167" fill="#bddf26" clip-path="url(#c1)"/>
<text class="s" font-size="11.111px" x="245.18 251.18 257.05" y="832" fill="#ffffff" fill-opacity="0.893">ETA</text>
<rect x="365.917" y="831.917" width="259.167" height="4.167" fill="#bddf26" clip-path="url(#c1)"/>
<text class="s" font-size="11.111px" x="483.99 491.36 498.99" y="832" fill="#ffffff" fill-opacity="0.934">NZC</text>
<rect x="635.917" y="831.917" width="151.167" height="4.167" fill="#bddf26" clip-path="url(#c1)"/>
<text class="s" font-size="11.111px" x="698.88 706.26 714.51" y="832" fill="#ffffff" fill-opacity="0.929">NDA</text>
<rect x="806.917" y="831.917" width="93.167" height="4.167" fill="#bddf26" clip-path="url(#c1)"/>
<text class="s" font-size="11.111px" x="843.88 850 856.75" y="832" fill="#ffffff" fill-opacity="0.893">SPE</text>
<rect x="919.917" y="831.917" width="53.167" height="4.167" fill="#bddf26" clip-path="url(#c1)"/>
<text class="s" font-size="11.111px" x="935.04 941.67 949.42" y="832" fill="#ffffff" fill-opacity="0.913">ARD</text>
<rect x="983.917" y="831.917" width="82.167" height="4.167" fill="#bddf26" clip-path="url(#c1)"/>
<text class="s" font-size="11.111px" x="1013.84 1019.84 1028.46" y="832" fill="#ffffff" fill-opacity="0.867">EGE</text>
<rect x="1081.917" y="831.917" width="122.167" height="4.167" fill="#bddf26" clip-path="url(#c1)"/>
<text class="s" font-size="11.111px" x="1132.02 1139.39 1145.27" y="832" fill="#ffffff" fill-opacity="0.924">NTA</text>
<rect x="1243.917" y="831.917" width="82.167" height="4.167" fill="#bddf26" clip-path="url(#c1)"/>
<text class="s" font-size="11.111px" x="1271.97 1280.59 1289.34" y="832" fill="#ffffff" fill-opacity="0.927">MON</text>
<rect x="1336.917" y="831.917" width="19.167" height="4.167" fill="#bddf26" clip-path="url(#c1)"/>
<text class="s" font-size="11.111px" x="1332.1 1340.22 1347.97" y="832" fill="#ffffff" fill-opacity="0.908">URS</text>
<rect x="1380.917" y="831.917" width="63.167" height="4.167" fill="#bddf26" clip-path="url(#c1)"/>
<text class="s" font-size="11.111px" x="1401.02 1407.65 1416.02" y="832" fill="#ffffff" fill-opacity="0.9">AHY</text>
<rect x="1458.917" y="831.917" width="53.167" height="4.167" fill="#bddf26" clip-path="url(#c1)"/>
<text class="s" font-size="11.111px" x="1473.08 1480.71 1488.83" y="832" fill="#ffffff" fill-opacity="0.912">GUM</text>
<rect x="1522.917" y="831.917" width="24.167" height="4.167" fill="#bddf26" clip-path="url(#c1)"/>
<text class="s" font-size="11.111px" x="1523.95 1531.7 1540.08" y="832" fill="#ffffff" fill-opacity="0.914">OHY</text>
<rect x="1723.917" y="831.917" width="24.167" height="4.167" fill="#bddf26" clip-path="url(#c1)"/>
<text class="s" font-size="11.111px" x="1724.83 1731.46 1739.83" y="832" fill="#ffffff" fill-opacity="0.893">XHE</text>
<rect x="1757.917" y="831.917" width="24.167" height="4.167" fill="#bddf26" clip-path="url(#c1)"/>
<text class="s" font-size="11.111px" x="1761.2 1767.2 1774.82" y="832" fill="#ffffff" fill-opacity="0.901">EVI</text>
<rect x="164.917" y="815.917" width="24.167" height="4.167" fill="#81d34d" clip-path="url(#c1)"/>
<text class="s" font-size="11.111px" x="166.01 171.89 179.51" y="815" fill="#ffffff" fill-opacity="0.913">AVB</text>
<rect x="223.917" y="815.917" width="63.167" height="4.167" fill="#81d34d" clip-path="url(#c1)"/>
<text class="s" font-size="11.111px" x="246.01 252.01 256.76" y="815" fill="#ffffff" fill-opacity="0.882">ELY</text>
<rect x="311.917" y="815.917" width="29.167" height="4.167" fill="#81d34d" clip-path="url(#c1)"/>
<text class="s" font-size="11.111px" x="312.16 318.91 326.53" y="815" fill="#ffffff" fill-opacity="0.933">CAM</text>
<rect x="365.917" y="815.917" width="127.167" height="4.167" fill="#81d34d" clip-path="url(#c1)"/>
<text class="s" font-size="11.111px" x="420.96 427.09 434.21" y="815" fill="#ffffff" fill-opacity="0.905">SSG</text>
<rect x="507.917" y="815.917" width="146.167" height="4.167" fill="#81d34d" clip-path="url(#c1)"/>
<text class="s" font-size="11.111px" x="568.05 573.8 581.55" y="815" fill="#ffffff" fill-opacity="0.923">PCA</text>
<rect x="703.917" y="815.917" width="34.167" height="4.167" fill="#81d34d" clip-path="url(#c1)"/>
<text class="s" font-size="11.111px" x="709.13 715.76 723.88" y="815" fill="#ffffff" fill-opacity="0.916">AUD</text>
<rect x="772.917" y="815.917" width="73.167" height="4.167" fill="#81d34d" clip-path="url(#c1)"/>
<text class="s" font-size="11.111px" x="798 804.63 812.75" y="815" fill="#ffffff" fill-opacity="0.903">AUR</text>
<rect x="870.917" y="815.917" width="117.167" height="4.167" fill="#81d34d" clip-path="url(#c1)"/>
<text class="s" font-size="11.111px" x="920.01 927.51 934.63" y="815" fill="#ffffff" fill-opacity="0.926">DSX</text>
<rect x="1002.917" y="815.917" width="14.167" height="4.167" fill="#81d34d" clip-path="url(#c1)"/>
<text class="s" font-size="11.111px" x="998.91 1006.66 1014.41" y="815" fill="#ffffff" fill-opacity="0.913">OCU</text>
<rect x="1061.917" y="815.917" width="151.167" height="4.167" fill="#81d34d" clip-path="url(#c1)"/>
<text class="s" font-size="11.111px" x="1126.84 1134.59 1141.59" y="815" fill="#ffffff" fill-opacity="0.898">OER</text>
<rect x="1243.917" y="815.917" width="23.167" height="4.167" fill="#81d34d" clip-path="url(#c1)"/>
<text class="s" font-size="11.111px" x="1243.02 1250.52 1257.77" y="815" fill="#ffffff" fill-opacity="0.923">DKD</text>
<rect x="1292.917" y="815.917" width="23.167" height="4.167" fill="#81d34d" clip-path="url(#c1)"/>
<text class="s" font-size="11.111px" x="1293.09 1300.59 1307.72" y="815" fill="#ffffff" fill-opacity="0.923">DSV</text>
<rect x="1341.917" y="815.917" width="23.167" height="4.167" fill="#81d34d" clip-path="url(#c1)"/>
<text class="s" font-size="11.111px" x="1343.91 1350.53 1355.28" y="815" fill="#ffffff" fill-opacity="0.903">ALY</text>
<rect x="1385.917" y="815.917" width="43.167" height="4.167" fill="#81d34d" clip-path="url(#c1)"/>
<text class="s" font-size="11.111px" x="1399.83 1402.08 1408.33" y="815" fill="#ffffff" fill-opacity="0.882">JLE</text>
<rect x="1458.917" y="815.917" width="24.167" height="4.167" fill="#81d34d" clip-path="url(#c1)"/>
<text class="s" font-size="11.111px" x="1461.13 1467.26 1475.01" y="815" fill="#ffffff" fill-opacity="0.923">SCC</text>
<rect x="1547.917" y="815.917" width="23.167" height="4.167" fill="#81d34d" clip-path="url(#c1)"/>
<text class="s" font-size="11.111px" x="1549.16 1554.53 1561.53" y="815" fill="#ffffff" fill-opacity="0.879">FEV</text>
<rect x="164.917" y="799.917" width="24.167" height="4.167" fill="#4ec36b" clip-path="url(#c1)"/>
<text class="s" font-size="11.111px" x="167.04 170.79 177.54" y="799" fill="#ffffff" fill-opacity="0.897">LYR</text>
<rect x="257.917" y="799.917" width="230.167" height="4.167" fill="#4ec36b" clip-path="url(#c1)"/>
<text class="s" font-size="11.111px" x="363.1 365.35 374.98" y="799" fill="#ffffff" fill-opacity="0.926">JMC</text>
<rect x="507.917" y="799.917" width="107.167" height="4.167" fill="#4ec36b" clip-path="url(#c1)"/>
<text class="s" font-size="11.111px" x="550.99 553.24 559.99" y="799" fill="#ffffff" fill-opacity="0.893">JPE</text>
<rect x="625.917" y="799.917" width="92.167" height="4.167" fill="#4ec36b" clip-path="url(#c1)"/>
<text class="s" font-size="11.111px" x="660.95 665.95 673.57" y="799" fill="#ffffff" fill-opacity="0.906">PAU</text>
<rect x="728.917" y="799.917" width="97.167" height="4.167" fill="#4ec36b" clip-path="url(#c1)"/>
<text class="s" font-size="11.111px" x="765 772.37 775.62" y="799" fill="#ffffff" fill-opacity="0.926">NIA</text>
<rect x="948.917" y="799.917" width="201.167" height="4.167" fill="#4ec36b" clip-path="url(#c1)"/>
<text class="s" font-size="11.111px" x="1040.05 1046.17 1052.05" y="799" fill="#ffffff" fill-opacity="0.904">STA</text>
<rect x="1159.917" y="799.917" width="88.167" height="4.167" fill="#4ec36b" clip-path="url(#c1)"/>
<text class="s" font-size="11.111px" x="1193.94 1201.32 1210.07" y="799" fill="#ffffff" fill-opacity="0.935">NOO</text>
<rect x="1257.917" y="799.917" width="186.167" height="4.167" fill="#4ec36b" clip-path="url(#c1)"/>
<text class="s" font-size="11.111px" x="1340.92 1347.67 1356.42" y="799" fill="#ffffff" fill-opacity="0.93">COM</text>
<rect x="1458.917" y="799.917" width="24.167" height="4.167" fill="#4ec36b" clip-path="url(#c1)"/>
<text class="s" font-size="11.111px" x="1458.98 1466.36 1474.11" y="799" fill="#ffffff" fill-opacity="0.94">NCC</text>
<rect x="1552.917" y="799.917" width="23.167" height="4.167" fill="#4ec36b" clip-path="url(#c1)"/>
<text class="s" font-size="11.111px" x="1554.1 1559.47 1566.47" y="799" fill="#ffffff" fill-opacity="0.886">FED</text>
<rect x="193.917" y="782.917" width="24.167" height="4.167" fill="#2ab07f" clip-path="url(#c1)"/>
<text class="s" font-size="11.111px" x="197.02 204.4 212.02" y="783" fill="#ffffff" fill-opacity="0.91">HVI</text>
<rect x="321.917" y="782.917" width="185.167" height="4.167" fill="#2ab07f" clip-path="url(#c1)"/>
<text class="s" font-size="11.111px" x="402.91 409.54 417.29" y="783" fill="#ffffff" fill-opacity="0.905">ARI</text>
<rect x="517.917" y="782.917" width="24.167" height="4.167" fill="#2ab07f" clip-path="url(#c1)"/>
<text class="s" font-size="11.111px" x="519.07 525.19 532.82" y="783" fill="#ffffff" fill-opacity="0.919">SZC</text>
<rect x="556.917" y="782.917" width="127.167" height="4.167" fill="#2ab07f" clip-path="url(#c1)"/>
<text class="s" font-size="11.111px" x="608 614.75 622.38" y="783" fill="#ffffff" fill-opacity="0.92">CAP</text>
<rect x="806.917" y="782.917" width="24.167" height="4.167" fill="#2ab07f" clip-path="url(#c1)"/>
<text class="s" font-size="11.111px" x="806.67 814.05 822.17" y="783" fill="#ffffff" fill-opacity="0.906">NUE</text>
<rect x="953.917" y="782.917" width="19.167" height="4.167" fill="#2ab07f" clip-path="url(#c1)"/>
<text class="s" font-size="11.111px" x="950.02 957.77 965.52" y="783" fill="#ffffff" fill-opacity="0.91">OCT</text>
<rect x="988.917" y="782.917" width="136.167" height="4.167" fill="#2ab07f" clip-path="url(#c1)"/>
<text class="s" font-size="11.111px" x="1050.04 1057.79 1065.54" y="783" fill="#ffffff" fill-opacity="0.902">ORI</text>
<rect x="1154.917" y="782.917" width="63.167" height="4.167" fill="#2ab07f" clip-path="url(#c1)"/>
<text class="s" font-size="11.111px" x="1174.07 1180.69 1190.32" y="783" fill="#ffffff" fill-opacity="0.924">AMO</text>
<rect x="1243.917" y="782.917" width="23.167" height="4.167" fill="#2ab07f" clip-path="url(#c1)"/>
<text class="s" font-size="11.111px" x="1244.03 1251.53 1258.28" y="783" fill="#ffffff" fill-opacity="0.925">DPC</text>
<rect x="1316.917" y="782.917" width="24.167" height="4.167" fill="#2ab07f" clip-path="url(#c1)"/>
<text class="s" font-size="11.111px" x="1319.89 1326.51 1334.14" y="783" fill="#ffffff" fill-opacity="0.93">XVI</text>
<rect x="1395.917" y="782.917" width="23.167" height="4.167" fill="#2ab07f" clip-path="url(#c1)"/>
<text class="s" font-size="11.111px" x="1396.03 1403.78 1411.91" y="783" fill="#ffffff" fill-opacity="0.914">QUA</text>
<rect x="1463.917" y="782.917" width="186.167" height="4.167" fill="#2ab07f" clip-path="url(#c1)"/>
<text class="s" font-size="11.111px" x="1548.1 1554.98 1562.6" y="783" fill="#ffffff" fill-opacity="0.924">AAN</text>
<rect x="340.917" y="766.917" width="29.167" height="4.167" fill="#1e9b8a" clip-path="url(#c1)"/>
<text class="s" font-size="11.111px" x="342.08 347.95 355.58" y="766" fill="#ffffff" fill-opacity="0.896">TAH</text>
<rect x="409.917" y="766.917" width="38.167" height="4.167" fill="#1e9b8a" clip-path="url(#c1)"/>
<text class="s" font-size="11.111px" x="423.05 425.3 432.3" y="766" fill="#ffffff" fill-opacity="0.89">JEA</text>
<rect x="468.917" y="766.917" width="24.167" height="4.167" fill="#1e9b8a" clip-path="url(#c1)"/>
<text class="s" font-size="11.111px" x="475.08 477.33 480.58" y="766" fill="#ffffff" fill-opacity="0.9">JIP</text>
<rect x="527.917" y="766.917" width="18.167" height="4.167" fill="#1e9b8a" clip-path="url(#c1)"/>
<text class="s" font-size="11.111px" x="528.96 534.71 541.46" y="766" fill="#ffffff" fill-opacity="0.905">PPS</text>
<rect x="561.917" y="766.917" width="29.167" height="4.167" fill="#1e9b8a" clip-path="url(#c1)"/>
<text class="s" font-size="11.111px" x="568.06 574.68 582.43" y="766" fill="#ffffff" fill-opacity="0.92">ZCS</text>
<rect x="615.917" y="766.917" width="33.167" height="4.167" fill="#1e9b8a" clip-path="url(#c1)"/>
<text class="s" font-size="11.111px" x="620.98 628.6 637.1" y="766" fill="#ffffff" fill-opacity="0.904">GDR</text>
<rect x="958.917" y="766.917" width="29.167" height="4.167" fill="#1e9b8a" clip-path="url(#c1)"/>
<text class="s" font-size="11.111px" x="959.96 967.46 974.71" y="766" fill="#ffffff" fill-opacity="0.913">DRA</text>
<rect x="1061.917" y="766.917" width="24.167" height="4.167" fill="#1e9b8a" clip-path="url(#c1)"/>
<text class="s" font-size="11.111px" x="1062.03 1066.78 1074.91" y="766" fill="#ffffff" fill-opacity="0.914">LUM</text>
<rect x="1100.917" y="766.917" width="24.167" height="4.167" fill="#1e9b8a" clip-path="url(#c1)"/>
<text class="s" font-size="11.111px" x="1101.88 1108.63 1115.38" y="766" fill="#ffffff" fill-opacity="0.901">RPU</text>
<rect x="1159.917" y="766.917" width="34.167" height="4.167" fill="#1e9b8a" clip-path="url(#c1)"/>
<text class="s" font-size="11.111px" x="1166.07 1172.82 1181.19" y="766" fill="#ffffff" fill-opacity="0.901">THA</text>
<rect x="1248.917" y="766.917" width="23.167" height="4.167" fill="#1e9b8a" clip-path="url(#c1)"/>
<text class="s" font-size="11.111px" x="1248.98 1254.73 1261.85" y="766" fill="#ffffff" fill-opacity="0.909">PSU</text>
<rect x="1424.917" y="766.917" width="87.167" height="4.167" fill="#1e9b8a" clip-path="url(#c1)"/>
<text class="s" font-size="11.111px" x="1459.94 1465.82 1473.57" y="766" fill="#ffffff" fill-opacity="0.918">XCB</text>
<rect x="419.917" y="749.917" width="24.167" height="4.167" fill="#25858e" clip-path="url(#c1)"/>
<text class="s" font-size="11.111px" x="423.22 425.47 432.72" y="750" fill="#ffffff" fill-opacity="0.911">JRC</text>
<rect x="532.917" y="749.917" width="23.167" height="4.167" fill="#25858e" clip-path="url(#c1)"/>
<text class="s" font-size="11.111px" x="533.05 539.8 547.42" y="750" fill="#ffffff" fill-opacity="0.93">CAN</text>
<rect x="566.917" y="749.917" width="24.167" height="4.167" fill="#25858e" clip-path="url(#c1)"/>
<text class="s" font-size="11.111px" x="568.17 572.55 580.17" y="750" fill="#ffffff" fill-opacity="0.919">FAN</text>
<rect x="620.917" y="749.917" width="122.167" height="4.167" fill="#25858e" clip-path="url(#c1)"/>
<text class="s" font-size="11.111px" x="671.06 676.81 683.81" y="750" fill="#ffffff" fill-opacity="0.891">PER</text>
<rect x="968.917" y="749.917" width="166.167" height="4.167" fill="#25858e" clip-path="url(#c1)"/>
<text class="s" font-size="11.111px" x="1040.01 1046.76 1052.64" y="750" fill="#ffffff" fill-opacity="0.909">CTA</text>
<rect x="1184.917" y="749.917" width="161.167" height="4.167" fill="#25858e" clip-path="url(#c1)"/>
<text class="s" font-size="11.111px" x="1254.12 1261.49 1268.24" y="750" fill="#ffffff" fill-opacity="0.895">HYD</text>
<rect x="1468.917" y="749.917" width="24.167" height="4.167" fill="#25858e" clip-path="url(#c1)"/>
<text class="s" font-size="11.111px" x="1469.02 1475.65 1483.77" y="750" fill="#ffffff" fill-opacity="0.924">XUM</text>
<rect x="429.917" y="733.917" width="23.167" height="4.167" fill="#2d708e" clip-path="url(#c1)"/>
<text class="s" font-size="11.111px" x="429.87 436.62 445.37" y="733" fill="#ffffff" fill-opacity="0.913">COR</text>
<rect x="576.917" y="733.917" width="156.167" height="4.167" fill="#2d708e" clip-path="url(#c1)"/>
<text class="s" font-size="11.111px" x="647.06 653.19 661.44" y="733" fill="#ffffff" fill-opacity="0.918">SDA</text>
<rect x="993.917" y="733.917" width="111.167" height="4.167" fill="#2d708e" clip-path="url(#c1)"/>
<text class="s" font-size="11.111px" x="1040.02 1045.27 1054.89" y="733" fill="#ffffff" fill-opacity="0.922">LMI</text>
<rect x="1115.917" y="733.917" width="107.167" height="4.167" fill="#2d708e" clip-path="url(#c1)"/>
<text class="s" font-size="11.111px" x="1156.17 1161.42 1168.42" y="733" fill="#ffffff" fill-opacity="0.896">LEO</text>
<rect x="1262.917" y="733.917" width="29.167" height="4.167" fill="#2d708e" clip-path="url(#c1)"/>
<text class="s" font-size="11.111px" x="1264.09 1270.09 1278.46" y="733" fill="#ffffff" fill-opacity="0.882">EHY</text>
<rect x="1488.917" y="733.917" width="23.167" height="4.167" fill="#2d708e" clip-path="url(#c1)"/>
<text class="s" font-size="11.111px" x="1490.12 1496.12 1503.87" y="733" fill="#ffffff" fill-opacity="0.903">ECV</text>
<rect x="591.917" y="717.917" width="23.167" height="4.167" fill="#375a8c" clip-path="url(#c1)"/>
<text class="s" font-size="11.111px" x="595.07 597.32 604.94" y="717" fill="#ffffff" fill-opacity="0.923">JXA</text>
<rect x="654.917" y="717.917" width="117.167" height="4.167" fill="#375a8c" clip-path="url(#c1)"/>
<text class="s" font-size="11.111px" x="704.99 710.62 718.37" y="717" fill="#ffffff" fill-opacity="0.916">KCG</text>
<rect x="1071.917" y="717.917" width="171.167" height="4.167" fill="#375a8c" clip-path="url(#c1)"/>
<text class="s" font-size="11.111px" x="1145.13 1151.75 1160.13" y="717" fill="#ffffff" fill-opacity="0.933">AND</text>
<rect x="1262.917" y="717.917" width="24.167" height="4.167" fill="#375a8c" clip-path="url(#c1)"/>
<text class="s" font-size="11.111px" x="1263.06 1270.31 1277.94" y="717" fill="#ffffff" fill-opacity="0.925">DAD</text>
<rect x="595.917" y="700.917" width="137.167" height="4.167" fill="#424086" clip-path="url(#c1)"/>
<text class="s" font-size="11.111px" x="658 664 671.75" y="701" fill="#ffffff" fill-opacity="0.879">ERI</text>
<rect x="1091.917" y="700.917" width="28.167" height="4.167" fill="#424086" clip-path="url(#c1)"/>
<text class="s" font-size="11.111px" x="1098.11 1104.23 1110.48" y="701" fill="#ffffff" fill-opacity="0.909">SLD</text>
<rect x="1199.917" y="700.917" width="23.167" height="4.167" fill="#424086" clip-path="url(#c1)"/>
<text class="s" font-size="11.111px" x="1199.91 1207.66 1215.41" y="701" fill="#ffffff" fill-opacity="0.913">ORS</text>
<rect x="1272.917" y="700.917" width="53.167" height="4.167" fill="#424086" clip-path="url(#c1)"/>
<text class="s" font-size="11.111px" x="1288.14 1295.76 1302.76" y="701" fill="#ffffff" fill-opacity="0.898">GEM</text>
<rect x="1110.917" y="684.917" width="24.167" height="4.167" fill="#482475" clip-path="url(#c1)"/>
<text class="s" font-size="11.111px" x="1110.97 1116.97 1125.1" y="684" fill="#ffffff" fill-opacity="0.922">KUM</text>
<path d="M75 842L75 641" fill="none" stroke="#ffffff" stroke-opacity="0.5" stroke-width="2.083" stroke-dasharray="2.083 3.437" stroke-linejoin="round" clip-path="url(#c1)"/>
<path d="M219 842L219 641" fill="none" stroke="#ffffff" stroke-opacity="0.5" stroke-width="2.083" stroke-dasharray="2.083 3.437" stroke-linejoin="round" clip-path="url(#c1)"/>
<path d="M365 842L365 641" fill="none" stroke="#ffffff" stroke-opacity="0.5" stroke-width="2.083" stroke-dasharray="2.083 3.437" stroke-linejoin="round" clip-path="url(#c1)"/>
<path d="M506 842L506 641" fill="none" stroke="#ffffff" stroke-opacity="0.5" stroke-width="2.083" stroke-dasharray="2.083 3.437" stroke-linejoin="round" clip-path="url(#c1)"/>
<path d="M651 842L651 641" fill="none" stroke="#ffffff" stroke-opacity="0.5" stroke-width="2.083" stroke-dasharray="2.083 3.437" stroke-linejoin="round" clip-path="url(#c1)"/>
<path d="M797 842L797 641" fill="none" stroke="#ffffff" stroke-opacity="0.5" stroke-width="2.083" stroke-dasharray="2.083 3.437" stroke-linejoin="round" clip-path="url(#c1)"/>
<path d="M940 842L940 641" fill="none" stroke="#ffffff" stroke-opacity="0.5" stroke-width="2.083" stroke-dasharray="2.083 3.437" stroke-linejoin="round" clip-path="url(#c1)"/>
<path d="M1091 842L1091 641" fill="none" stroke="#ffffff" stroke-opacity="0.5" stroke-width="2.083" stroke-dasharray="2.083 3.437" stroke-linejoin="round" clip-path="url(#c1)"/>
<path d="M1239 842L1239 641" fill="none" stroke="#ffffff" stroke-opacity="0.5" stroke-width="2.083" stroke-dasharray="2.083 3.437" stroke-linejoin="round" clip-path="url(#c1)"/>
<path d="M1394 842L1394 641" fill="none" stroke="#ffffff" stroke-opacity="0.5" stroke-width="2.083" stroke-dasharray="2.083 3.437" stroke-linejoin="round" clip-path="url(#c1)"/>
<path d="M1548 842L1548 641" fill="none" stroke="#ffffff" stroke-opacity="0.5" stroke-width="2.083" stroke-dasharray="2.083 3.437" stroke-linejoin="round" clip-path="url(#c1)"/>
<path d="M1687 842L1687 641" fill="none" stroke="#ffffff" stroke-opacity="0.5" stroke-width="2.083" stroke-dasharray="2.083 3.437" stroke-linejoin="round" clip-path="url(#c1)"/>
<path d="M114 834L122 834M118 838L118 830" fill="#ffffff" stroke="#ffffff" stroke-width="2.083" stroke-linejoin="round" clip-path="url(#c1)"/>
<path d="M241 834L249 834M245 838L245 830" fill="#ffffff" stroke="#ffffff" stroke-width="2.083" stroke-linejoin="round" clip-path="url(#c1)"/>
<path d="M511 834L519 834M515 838L515 830" fill="#ffffff" stroke="#ffffff" stroke-width="2.083" stroke-linejoin="round" clip-path="url(#c1)"/>
<path d="M707 834L715 834M711 838L711 830" fill="#ffffff" stroke="#ffffff" stroke-width="2.083" stroke-linejoin="round" clip-path="url(#c1)"/>
<path d="M834 834L842 834M838 838L838 830" fill="#ffffff" stroke="#ffffff" stroke-width="2.083" stroke-linejoin="round" clip-path="url(#c1)"/>
<path d="M962 834L970 834M966 838L966 830" fill="#ffffff" stroke="#ffffff" stroke-width="2.083" stroke-linejoin="round" clip-path="url(#c1)"/>
<path d="M987 834L995 834M991 838L991 830" fill="#ffffff" stroke="#ffffff" stroke-width="2.083" stroke-linejoin="round" clip-path="url(#c1)"/>
<path d="M1117 834L1125 834M1121 838L1121 830" fill="#ffffff" stroke="#ffffff" stroke-width="2.083" stroke-linejoin="round" clip-path="url(#c1)"/>
<path d="M1296 834L1304 834M1300 838L1300 830" fill="#ffffff" stroke="#ffffff" stroke-width="2.083" stroke-linejoin="round" clip-path="url(#c1)"/>
<path d="M1342 834L1350 834M1346 838L1346 830" fill="#ffffff" stroke="#ffffff" stroke-width="2.083" stroke-linejoin="round" clip-path="url(#c1)"/>
<path d="M1413 834L1421 834M1417 838L1417 830" fill="#ffffff" stroke="#ffffff" stroke-width="2.083" stroke-linejoin="round" clip-path="url(#c1)"/>
<path d="M1482 834L1490 834M1486 838L1486 830" fill="#ffffff" stroke="#ffffff" stroke-width="2.083" stroke-linejoin="round" clip-path="url(#c1)"/>
<path d="M1531 834L1539 834M1535 838L1535 830" fill="#ffffff" stroke="#ffffff" stroke-width="2.083" stroke-linejoin="round" clip-path="url(#c1)"/>
<path d="M1732 834L1740 834M1736 838L1736 830" fill="#ffffff" stroke="#ffffff" stroke-width="2.083" stroke-linejoin="round" clip-path="url(#c1)"/>
<path d="M1766 834L1774 834M1770 838L1770 830" fill="#ffffff" stroke="#ffffff" stroke-width="2.083" stroke-linejoin="round" clip-path="url(#c1)"/>
<path d="M173 818L181 818M177 822L177 814" fill="#ffffff" stroke="#ffffff" stroke-width="2.083" stroke-linejoin="round" clip-path="url(#c1)"/>
<path d="M256 818L264 818M260 822L260 814" fill="#ffffff" stroke="#ffffff" stroke-width="2.083" stroke-linejoin="round" clip-path="url(#c1)"/>
<path d="M324 818L332 818M328 822L328 814" fill="#ffffff" stroke="#ffffff" stroke-width="2.083" stroke-linejoin="round" clip-path="url(#c1)"/>
<path d="M438 818L446 818M442 822L442 814" fill="#ffffff" stroke="#ffffff" stroke-width="2.083" stroke-linejoin="round" clip-path="url(#c1)"/>
<path d="M599 818L607 818M603 822L603 814" fill="#ffffff" stroke="#ffffff" stroke-width="2.083" stroke-linejoin="round" clip-path="url(#c1)"/>
<path d="M717 818L725 818M721 822L721 814" fill="#ffffff" stroke="#ffffff" stroke-width="2.083" stroke-linejoin="round" clip-path="url(#c1)"/>
<path d="M794 818L802 818M798 822L798 814" fill="#ffffff" stroke="#ffffff" stroke-width="2.083" stroke-linejoin="round" clip-path="url(#c1)"/>
<path d="M940 818L948 818M944 822L944 814" fill="#ffffff" stroke="#ffffff" stroke-width="2.083" stroke-linejoin="round" clip-path="url(#c1)"/>
<path d="M1006 818L1014 818M1010 822L1010 814" fill="#ffffff" stroke="#ffffff" stroke-width="2.083" stroke-linejoin="round" clip-path="url(#c1)"/>
<path d="M1153 818L1161 818M1157 822L1157 814" fill="#ffffff" stroke="#ffffff" stroke-width="2.083" stroke-linejoin="round" clip-path="url(#c1)"/>
<path d="M1251 818L1259 818M1255 822L1255 814" fill="#ffffff" stroke="#ffffff" stroke-width="2.083" stroke-linejoin="round" clip-path="url(#c1)"/>
<path d="M1300 818L1308 818M1304 822L1304 814" fill="#ffffff" stroke="#ffffff" stroke-width="2.083" stroke-linejoin="round" clip-path="url(#c1)"/>
<path d="M1350 818L1358 818M1354 822L1354 814" fill="#ffffff" stroke="#ffffff" stroke-width="2.083" stroke-linejoin="round" clip-path="url(#c1)"/>
<path d="M1403 818L1411 818M1407 822L1407 814" fill="#ffffff" stroke="#ffffff" stroke-width="2.083" stroke-linejoin="round" clip-path="url(#c1)"/>
<path d="M1467 818L1475 818M1471 822L1471 814" fill="#ffffff" stroke="#ffffff" stroke-width="2.083" stroke-linejoin="round" clip-path="url(#c1)"/>
<path d="M1555 818L1563 818M1559 822L1559 814" fill="#ffffff" stroke="#ffffff" stroke-width="2.083" stroke-linejoin="round" clip-path="url(#c1)"/>
<path d="M175 802L183 802M179 806L179 798" fill="#ffffff" stroke="#ffffff" stroke-width="2.083" stroke-linejoin="round" clip-path="url(#c1)"/>
<path d="M379 802L387 802M383 806L383 798" fill="#ffffff" stroke="#ffffff" stroke-width="2.083" stroke-linejoin="round" clip-path="url(#c1)"/>
<path d="M545 802L553 802M549 806L549 798" fill="#ffffff" stroke="#ffffff" stroke-width="2.083" stroke-linejoin="round" clip-path="url(#c1)"/>
<path d="M683 802L691 802M687 806L687 798" fill="#ffffff" stroke="#ffffff" stroke-width="2.083" stroke-linejoin="round" clip-path="url(#c1)"/>
<path d="M742 802L750 802M746 806L746 798" fill="#ffffff" stroke="#ffffff" stroke-width="2.083" stroke-linejoin="round" clip-path="url(#c1)"/>
<path d="M1075 802L1083 802M1079 806L1079 798" fill="#ffffff" stroke="#ffffff" stroke-width="2.083" stroke-linejoin="round" clip-path="url(#c1)"/>
<path d="M1217 802L1225 802M1221 806L1221 798" fill="#ffffff" stroke="#ffffff" stroke-width="2.083" stroke-linejoin="round" clip-path="url(#c1)"/>
<path d="M1305 802L1313 802M1309 806L1309 798" fill="#ffffff" stroke="#ffffff" stroke-width="2.083" stroke-linejoin="round" clip-path="url(#c1)"/>
<path d="M1467 802L1475 802M1471 806L1471 798" fill="#ffffff" stroke="#ffffff" stroke-width="2.083" stroke-linejoin="round" clip-path="url(#c1)"/>
<path d="M1560 802L1568 802M1564 806L1564 798" fill="#ffffff" stroke="#ffffff" stroke-width="2.083" stroke-linejoin="round" clip-path="url(#c1)"/>
<path d="M202 785L210 785M206 789L206 781" fill="#ffffff" stroke="#ffffff" stroke-width="2.083" stroke-linejoin="round" clip-path="url(#c1)"/>
<path d="M401 785L409 785M405 789L405 781" fill="#ffffff" stroke="#ffffff" stroke-width="2.083" stroke-linejoin="round" clip-path="url(#c1)"/>
<path d="M526 785L534 785M530 789L530 781" fill="#ffffff" stroke="#ffffff" stroke-width="2.083" stroke-linejoin="round" clip-path="url(#c1)"/>
<path d="M639 785L647 785M643 789L643 781" fill="#ffffff" stroke="#ffffff" stroke-width="2.083" stroke-linejoin="round" clip-path="url(#c1)"/>
<path d="M815 785L823 785M819 789L819 781" fill="#ffffff" stroke="#ffffff" stroke-width="2.083" stroke-linejoin="round" clip-path="url(#c1)"/>
<path d="M960 785L968 785M964 789L964 781" fill="#ffffff" stroke="#ffffff" stroke-width="2.083" stroke-linejoin="round" clip-path="url(#c1)"/>
<path d="M1041 785L1049 785M1045 789L1045 781" fill="#ffffff" stroke="#ffffff" stroke-width="2.083" stroke-linejoin="round" clip-path="url(#c1)"/>
<path d="M1188 785L1196 785M1192 789L1192 781" fill="#ffffff" stroke="#ffffff" stroke-width="2.083" stroke-linejoin="round" clip-path="url(#c1)"/>
<path d="M1251 785L1259 785M1255 789L1255 781" fill="#ffffff" stroke="#ffffff" stroke-width="2.083" stroke-linejoin="round" clip-path="url(#c1)"/>
<path d="M1325 785L1333 785M1329 789L1329 781" fill="#ffffff" stroke="#ffffff" stroke-width="2.083" stroke-linejoin="round" clip-path="url(#c1)"/>
<path d="M1403 785L1411 785M1407 789L1407 781" fill="#ffffff" stroke="#ffffff" stroke-width="2.083" stroke-linejoin="round" clip-path="url(#c1)"/>
<path d="M1546 785L1554 785M1550 789L1550 781" fill="#ffffff" stroke="#ffffff" stroke-width="2.083" stroke-linejoin="round" clip-path="url(#c1)"/>
<path d="M356 769L364 769M360 773L360 765" fill="#ffffff" stroke="#ffffff" stroke-width="2.083" stroke-linejoin="round" clip-path="url(#c1)"/>
<path d="M427 769L435 769M431 773L431 765" fill="#ffffff" stroke="#ffffff" stroke-width="2.083" stroke-linejoin="round" clip-path="url(#c1)"/>
<path d="M477 769L485 769M481 773L481 765" fill="#ffffff" stroke="#ffffff" stroke-width="2.083" stroke-linejoin="round" clip-path="url(#c1)"/>
<path d="M536 769L544 769M540 773L540 765" fill="#ffffff" stroke="#ffffff" stroke-width="2.083" stroke-linejoin="round" clip-path="url(#c1)"/>
<path d="M571 769L579 769M575 773L575 765" fill="#ffffff" stroke="#ffffff" stroke-width="2.083" stroke-linejoin="round" clip-path="url(#c1)"/>
<path d="M631 769L639 769M635 773L635 765" fill="#ffffff" stroke="#ffffff" stroke-width="2.083" stroke-linejoin="round" clip-path="url(#c1)"/>
<path d="M974 769L982 769M978 773L978 765" fill="#ffffff" stroke="#ffffff" stroke-width="2.083" stroke-linejoin="round" clip-path="url(#c1)"/>
<path d="M1070 769L1078 769M1074 773L1074 765" fill="#ffffff" stroke="#ffffff" stroke-width="2.083" stroke-linejoin="round" clip-path="url(#c1)"/>
<path d="M1109 769L1117 769M1113 773L1113 765" fill="#ffffff" stroke="#ffffff" stroke-width="2.083" stroke-linejoin="round" clip-path="url(#c1)"/>
<path d="M1178 769L1186 769M1182 773L1182 765" fill="#ffffff" stroke="#ffffff" stroke-width="2.083" stroke-linejoin="round" clip-path="url(#c1)"/>
<path d="M1256 769L1264 769M1260 773L1260 765" fill="#ffffff" stroke="#ffffff" stroke-width="2.083" stroke-linejoin="round" clip-path="url(#c1)"/>
<path d="M1467 769L1475 769M1471 773L1471 765" fill="#ffffff" stroke="#ffffff" stroke-width="2.083" stroke-linejoin="round" clip-path="url(#c1)"/>
<path d="M428 752L436 752M432 756L432 748" fill="#ffffff" stroke="#ffffff" stroke-width="2.083" stroke-linejoin="round" clip-path="url(#c1)"/>
<path d="M540 752L548 752M544 756L544 748" fill="#ffffff" stroke="#ffffff" stroke-width="2.083" stroke-linejoin="round" clip-path="url(#c1)"/>
<path d="M575 752L583 752M579 756L579 748" fill="#ffffff" stroke="#ffffff" stroke-width="2.083" stroke-linejoin="round" clip-path="url(#c1)"/>
<path d="M704 752L712 752M708 756L708 748" fill="#ffffff" stroke="#ffffff" stroke-width="2.083" stroke-linejoin="round" clip-path="url(#c1)"/>
<path d="M1095 752L1103 752M1099 756L1099 748" fill="#ffffff" stroke="#ffffff" stroke-width="2.083" stroke-linejoin="round" clip-path="url(#c1)"/>
<path d="M1271 752L1279 752M1275 756L1275 748" fill="#ffffff" stroke="#ffffff" stroke-width="2.083" stroke-linejoin="round" clip-path="url(#c1)"/>
<path d="M1477 752L1485 752M1481 756L1481 748" fill="#ffffff" stroke="#ffffff" stroke-width="2.083" stroke-linejoin="round" clip-path="url(#c1)"/>
<path d="M438 736L446 736M442 740L442 732" fill="#ffffff" stroke="#ffffff" stroke-width="2.083" stroke-linejoin="round" clip-path="url(#c1)"/>
<path d="M631 736L639 736M635 740L635 732" fill="#ffffff" stroke="#ffffff" stroke-width="2.083" stroke-linejoin="round" clip-path="url(#c1)"/>
<path d="M1039 736L1047 736M1043 740L1043 732" fill="#ffffff" stroke="#ffffff" stroke-width="2.083" stroke-linejoin="round" clip-path="url(#c1)"/>
<path d="M1168 736L1176 736M1172 740L1172 732" fill="#ffffff" stroke="#ffffff" stroke-width="2.083" stroke-linejoin="round" clip-path="url(#c1)"/>
<path d="M1275 736L1283 736M1279 740L1279 732" fill="#ffffff" stroke="#ffffff" stroke-width="2.083" stroke-linejoin="round" clip-path="url(#c1)"/>
<path d="M1497 736L1505 736M1501 740L1501 732" fill="#ffffff" stroke="#ffffff" stroke-width="2.083" stroke-linejoin="round" clip-path="url(#c1)"/>
<path d="M599 720L607 720M603 724L603 716" fill="#ffffff" stroke="#ffffff" stroke-width="2.083" stroke-linejoin="round" clip-path="url(#c1)"/>
<path d="M727 720L735 720M731 724L731 716" fill="#ffffff" stroke="#ffffff" stroke-width="2.083" stroke-linejoin="round" clip-path="url(#c1)"/>
<path d="M1188 720L1196 720M1192 724L1192 716" fill="#ffffff" stroke="#ffffff" stroke-width="2.083" stroke-linejoin="round" clip-path="url(#c1)"/>
<path d="M1271 720L1279 720M1275 724L1275 716" fill="#ffffff" stroke="#ffffff" stroke-width="2.083" stroke-linejoin="round" clip-path="url(#c1)"/>
<path d="M688 703L696 703M692 707L692 699" fill="#ffffff" stroke="#ffffff" stroke-width="2.083" stroke-linejoin="round" clip-path="url(#c1)"/>
<path d="M1102 703L1110 703M1106 707L1106 699" fill="#ffffff" stroke="#ffffff" stroke-width="2.083" stroke-linejoin="round" clip-path="url(#c1)"/>
<path d="M1207 703L1215 703M1211 707L1211 699" fill="#ffffff" stroke="#ffffff" stroke-width="2.083" stroke-linejoin="round" clip-path="url(#c1)"/>
<path d="M1300 703L1308 703M1304 707L1304 699" fill="#ffffff" stroke="#ffffff" stroke-width="2.083" stroke-linejoin="round" clip-path="url(#c1)"/>
<path d="M1119 687L1127 687M1123 691L1123 683" fill="#ffffff" stroke="#ffffff" stroke-width="2.083" stroke-linejoin="round" clip-path="url(#c1)"/>
<rect x="746" y="266" width="2" height="2" fill="#ff6347"/>
</svg></body></html>
